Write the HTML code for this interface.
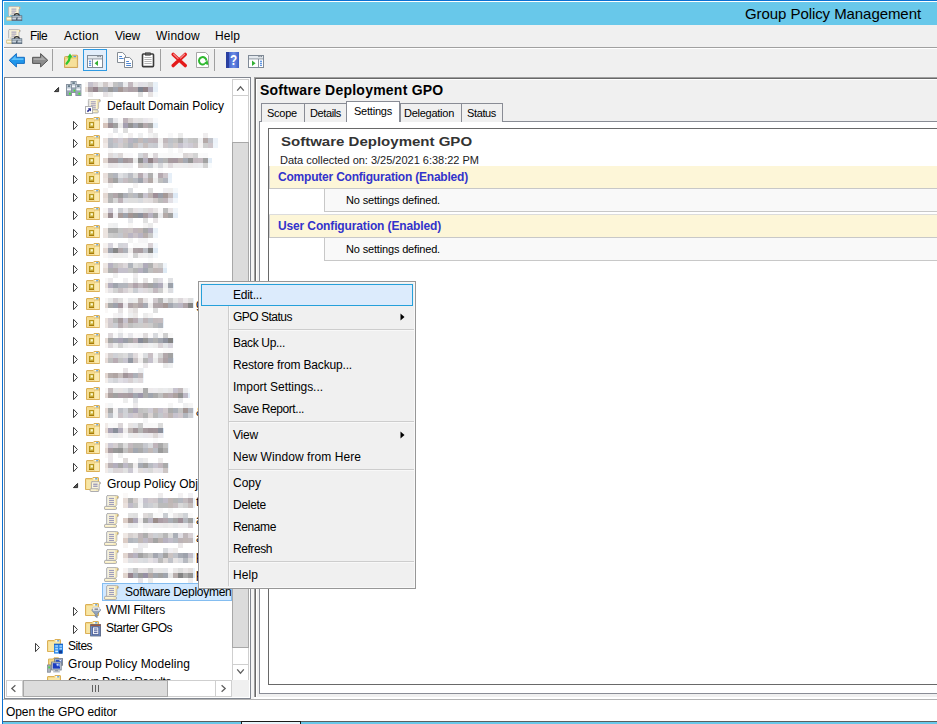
<!DOCTYPE html><html><head><meta charset="utf-8"><title>Group Policy Management</title><style>html,body{margin:0;padding:0}body{width:937px;height:724px;position:relative;overflow:hidden;background:#fff;font-family:'Liberation Sans',sans-serif}
body>div,body>svg,body>span{position:absolute;display:block}.t{white-space:pre}</style></head><body><div style="left:0px;top:0px;width:937px;height:724px;background:#ffffff;"></div>
<div style="left:2px;top:0px;width:935px;height:1px;background:#0a70d2;"></div>
<div style="left:2px;top:0px;width:1px;height:724px;background:#0a70d2;"></div>
<div style="left:4px;top:2px;width:933px;height:23px;background:#68c8ea;"></div>
<div style="left:4px;top:25px;width:933px;height:674px;background:#f0f0f0;"></div>
<span class="t" style="left:745px;top:6px;font-size:15px;line-height:15px;color:#000;letter-spacing:-0.069px;">Group Policy Management</span>
<svg style="left:6px;top:5px" width="17" height="16" viewBox="0 0 17 16"><path d="M3 1.6 H12.4 Q14.4 1.7 14.4 3 Q14.3 4 13 4.1 V10 H2.6 V2.6 Q2.6 1.6 3.6 1.6 Z" fill="#fbf4d6" stroke="#b1b1b5" stroke-width="0.9"/><path d="M3 2.4 V11 H4.2 V2 Z" fill="#e8e8e4"/><path d="M13 2 Q14 2.2 14 3 Q13.9 3.7 13 3.8 Z" fill="#d2b465"/><path d="M5.4 4.1 H10.4 M5.4 6.1 H10.4 M5.4 8.1 H9" stroke="#7f7db4" stroke-width="0.8"/><path d="M0.9 12 H7 V15.4 H0.9 Q0.2 15.2 0.2 13.8 Q0.2 12.1 0.9 12 Z" fill="#f6e9b8" stroke="#c4b88c" stroke-width="0.8"/><path d="M1.2 13 H6 V13.8 H1.2 Z" fill="#fffdf0"/><path d="M8.2 11 Q8.4 8.6 10.8 8.6 Q13.2 8.6 13.4 11" fill="none" stroke="#2a2a2a" stroke-width="1.1"/><rect x="6" y="10.8" width="9.8" height="4.8" fill="#8797a6" stroke="#5a6a7a" stroke-width="0.8"/><rect x="6.4" y="11.2" width="9" height="1.2" fill="#b7c3cd"/><rect x="6.4" y="13" width="9" height="1.1" fill="#c9d3db"/><rect x="10" y="12" width="1.4" height="2.6" fill="#1e2e3e"/><rect x="10.3" y="12.3" width="0.8" height="1.2" fill="#e8eef2"/></svg>
<svg style="left:6px;top:28px" width="17" height="16" viewBox="0 0 17 16"><path d="M3 1.6 H12.4 Q14.4 1.7 14.4 3 Q14.3 4 13 4.1 V10 H2.6 V2.6 Q2.6 1.6 3.6 1.6 Z" fill="#fbf4d6" stroke="#b1b1b5" stroke-width="0.9"/><path d="M3 2.4 V11 H4.2 V2 Z" fill="#e8e8e4"/><path d="M13 2 Q14 2.2 14 3 Q13.9 3.7 13 3.8 Z" fill="#d2b465"/><path d="M5.4 4.1 H10.4 M5.4 6.1 H10.4 M5.4 8.1 H9" stroke="#7f7db4" stroke-width="0.8"/><path d="M0.9 12 H7 V15.4 H0.9 Q0.2 15.2 0.2 13.8 Q0.2 12.1 0.9 12 Z" fill="#f6e9b8" stroke="#c4b88c" stroke-width="0.8"/><path d="M1.2 13 H6 V13.8 H1.2 Z" fill="#fffdf0"/><path d="M8.2 11 Q8.4 8.6 10.8 8.6 Q13.2 8.6 13.4 11" fill="none" stroke="#2a2a2a" stroke-width="1.1"/><rect x="6" y="10.8" width="9.8" height="4.8" fill="#8797a6" stroke="#5a6a7a" stroke-width="0.8"/><rect x="6.4" y="11.2" width="9" height="1.2" fill="#b7c3cd"/><rect x="6.4" y="13" width="9" height="1.1" fill="#c9d3db"/><rect x="10" y="12" width="1.4" height="2.6" fill="#1e2e3e"/><rect x="10.3" y="12.3" width="0.8" height="1.2" fill="#e8eef2"/></svg>
<span class="t" style="left:30px;top:30px;font-size:12px;line-height:12px;color:#000;letter-spacing:-0.586px;">File</span>
<span class="t" style="left:64px;top:30px;font-size:12px;line-height:12px;color:#000;letter-spacing:0.273px;">Action</span>
<span class="t" style="left:115px;top:30px;font-size:12px;line-height:12px;color:#000;letter-spacing:-0.199px;">View</span>
<span class="t" style="left:156px;top:30px;font-size:12px;line-height:12px;color:#000;letter-spacing:0.219px;">Window</span>
<span class="t" style="left:215px;top:30px;font-size:12px;line-height:12px;color:#000;letter-spacing:0.078px;">Help</span>
<div style="left:4px;top:47px;width:933px;height:1px;background:#a0a0a0;"></div>
<div style="left:4px;top:48px;width:933px;height:1px;background:#ffffff;"></div>
<svg style="left:8px;top:51px" width="18" height="18" viewBox="0 0 18 18"><path d="M1.2 9.3 L8.4 2.6 V6.3 H16.4 V12.4 H8.4 V16 Z" fill="#2196ea" stroke="#176fc4" stroke-width="1" stroke-linejoin="round"/><path d="M3.2 9 L7.6 4.8 V7.2 H15.4 V9 Z" fill="#5cc0fa"/></svg>
<svg style="left:31px;top:51px" width="18" height="18" viewBox="0 0 18 18"><path d="M16.8 9.3 L9.6 2.6 V6.3 H1.6 V12.4 H9.6 V16 Z" fill="#8c8c8c" stroke="#555" stroke-width="1" stroke-linejoin="round"/><path d="M14.8 9 L10.4 4.8 V7.2 H2.6 V9 Z" fill="#aaaaaa"/></svg>
<div style="left:52px;top:49px;width:1px;height:22px;background:#a0a0a0"></div>
<svg style="left:63px;top:52px" width="17" height="17" viewBox="0 0 17 17"><path d="M1.5 5.5 Q1.5 4.5 2.5 4.5 H8 L9.4 3.2 H14 Q14.6 3.2 14.6 4 V15.5 H1.5 Z" fill="#f0d27c" stroke="#d0a65a" stroke-width="1"/><path d="M2.5 7 H13.6 V14.6 H2.5 Z" fill="#f6e09a"/><rect x="10.6" y="4" width="2.4" height="1.2" fill="#4d9cf0"/><path d="M3.6 11.6 Q6.4 9.4 6.8 5.4" fill="none" stroke="#2ec82e" stroke-width="2.3" stroke-linecap="round"/><path d="M4.2 5.6 L7 1.6 L9.6 5.4 Z" fill="#2ec82e"/></svg>
<div style="left:83px;top:49px;width:24px;height:22px;background:#e2eefb;border:1px solid #2f9ae2;box-sizing:border-box"></div>
<svg style="left:87px;top:55px" width="16" height="13" viewBox="0 0 16 13"><rect x="0.5" y="0.5" width="15" height="12" fill="#fff" stroke="#808a96" stroke-width="1"/><rect x="1" y="1" width="14" height="2.4" fill="#e4e9ee"/><path d="M10.4 1.6 H11.6 M12.6 1.6 H13.8" stroke="#59636d" stroke-width="1"/><path d="M1 3.9 H15" stroke="#8a94a0"/><path d="M5.5 4 V12" stroke="#8a94a0"/><path d="M2 6.3 H4.2 M2 8.3 H4.2 M2 10.3 H4.2" stroke="#2f74d8" stroke-width="1.1"/><path d="M11 5.6 V11 L7.6 8.3 Z" fill="#34b034"/></svg>
<svg style="left:117px;top:52px" width="17" height="16" viewBox="0 0 17 16"><path d="M0.5 0.5 H5.6 L8.5 3.4 V10.5 H0.5 Z" fill="#fff" stroke="#848c94" stroke-width="1"/><path d="M2.2 4.5 H5 M2.2 6.5 H6.6" stroke="#4f86d0" stroke-width="1"/><path d="M7.5 5.5 H12.6 L15.5 8.4 V15.5 H7.5 Z" fill="#fff" stroke="#848c94" stroke-width="1"/><path d="M9.2 9.5 H12 M9.2 11.5 H14 M9.2 13.5 H14" stroke="#4f86d0" stroke-width="1"/></svg>
<svg style="left:141px;top:52px" width="14" height="16" viewBox="0 0 14 16"><rect x="1.5" y="2" width="11" height="12.6" rx="0.8" fill="#fff" stroke="#3a3a3a" stroke-width="1.6"/><rect x="4.4" y="0.8" width="5.2" height="2.4" fill="#5c5c5c" stroke="#333" stroke-width="0.6"/><path d="M3.4 5.5 H10.6 M3.4 7.5 H10.6 M3.4 9.5 H10.6 M3.4 11.5 H10.6" stroke="#b4b4b4" stroke-width="1"/></svg>
<div style="left:160px;top:49px;width:1px;height:22px;background:#a0a0a0"></div>
<svg style="left:171px;top:52px" width="16" height="16" viewBox="0 0 16 16"><path d="M2.2 2.4 L14.2 13.6 M14.2 2.4 L2.2 13.6" stroke="#e41a1a" stroke-width="3.4" stroke-linecap="round"/><path d="M2.6 2.2 L7 6.4 M13.6 2.2 L9.6 6" stroke="#f28c8c" stroke-width="1.2" stroke-linecap="round"/></svg>
<svg style="left:196px;top:52px" width="14" height="17" viewBox="0 0 14 17"><path d="M0.5 0.5 H9.6 L12.5 3.4 V15.5 H0.5 Z" fill="#fff" stroke="#a6a6a6" stroke-width="1"/><path d="M10.4 8.6 A3.7 3.7 0 1 0 8.6 12" fill="none" stroke="#2eb82e" stroke-width="2"/><path d="M7.4 11.6 L12.4 13 L11.6 8.2 Z" fill="#2eb82e"/></svg>
<div style="left:214px;top:49px;width:1px;height:22px;background:#a0a0a0"></div>
<div style="left:226px;top:52px;width:13px;height:16px;background:linear-gradient(90deg,#2a40a0 0,#2a40a0 2.5px,#4666cf 3px,#6c8ce6 60%,#3c5cc4 100%);"></div>
<span class="t" style="left:229.6px;top:52px;font-size:15px;line-height:16px;font-weight:700;color:#fff;transform:scaleX(0.78);transform-origin:0 0">?</span>
<svg style="left:248px;top:55px" width="16" height="13" viewBox="0 0 16 13"><rect x="0.5" y="0.5" width="15" height="12" fill="#fff" stroke="#808a96" stroke-width="1"/><rect x="1" y="1" width="14" height="2.4" fill="#e4e9ee"/><path d="M10.4 1.6 H11.6 M12.6 1.6 H13.8" stroke="#59636d" stroke-width="1"/><path d="M1 3.9 H15" stroke="#8a94a0"/><path d="M10.5 4 V12" stroke="#8a94a0"/><path d="M12 6.3 H14 M12 8.3 H14 M12 10.3 H14" stroke="#2f74d8" stroke-width="1.1"/><path d="M4 5.6 V11 L7.6 8.3 Z" fill="#34b034"/></svg>
<div style="left:4px;top:77px;width:247px;height:622px;background:#ffffff;border:1px solid #828790;box-sizing:border-box;"></div>
<svg style="left:53px;top:86px" width="7" height="7" viewBox="0 0 7 7"><path d="M5.6 1.4 L5.6 5.6 L1.4 5.6 Z" fill="#595959" stroke="#303030" stroke-width="1"/></svg>
<svg style="left:66px;top:81px" width="16" height="16" viewBox="0 0 16 16"><rect x="5.1" y="0.5" width="5" height="11" fill="#a9b5c1" stroke="#8893a0" stroke-width="1"/><rect x="5.6" y="1" width="4" height="2.4" fill="#dbe6ee"/><rect x="6.3" y="1.5" width="2.6" height="1.1" fill="#1b3545"/><rect x="5.6" y="4.4" width="4" height="1.8" fill="#f4f7fa"/><rect x="5.6" y="7" width="4" height="4" fill="#95a3b3"/><rect x="7.6" y="8.7" width="1.9" height="1.9" fill="#46e82c"/><rect x="0.5" y="3.5" width="5" height="11" fill="#a9b5c1" stroke="#8893a0" stroke-width="1"/><rect x="1" y="4" width="4" height="2.4" fill="#dbe6ee"/><rect x="1.7" y="4.5" width="2.6" height="1.1" fill="#1b3545"/><rect x="1" y="7.4" width="4" height="1.8" fill="#f4f7fa"/><rect x="1" y="10" width="4" height="4" fill="#95a3b3"/><rect x="3" y="11.7" width="1.9" height="1.9" fill="#46e82c"/><rect x="9.9" y="3.5" width="5" height="11" fill="#a9b5c1" stroke="#8893a0" stroke-width="1"/><rect x="10.4" y="4" width="4" height="2.4" fill="#dbe6ee"/><rect x="11.1" y="4.5" width="2.6" height="1.1" fill="#1b3545"/><rect x="10.4" y="7.4" width="4" height="1.8" fill="#f4f7fa"/><rect x="10.4" y="10" width="4" height="4" fill="#95a3b3"/><rect x="12.4" y="11.7" width="1.9" height="1.9" fill="#46e82c"/></svg>
<svg style="left:85px;top:99px" width="16" height="16" viewBox="0 0 16 16"><g transform="translate(0.8,-0.6)"><path d="M3.2 0.6 H12.6 Q14.6 0.6 14.6 2.4 Q14.6 3.8 12.8 3.8 V9.5 L11.6 11.4 H2.6 V2 Q2.6 0.6 3.8 0.6 Z" fill="#fbf4d6" stroke="#a9a9ad" stroke-width="0.9"/><path d="M3.1 1.6 V11 H4.2 V1.2 Z" fill="#e6e6e2"/><path d="M11.4 1.1 H12.4 V10.2 L11.4 11 Z" fill="#eddca6"/><path d="M12.8 1 Q14.2 1.2 14.2 2.4 Q14.1 3.4 12.8 3.5 Z" fill="#d2b465"/><path d="M5 3.4 H10 M5 5.4 H10 M5 7.4 H10 M5 9.4 H10" stroke="#8a88b6" stroke-width="0.9"/><path d="M1 11.4 H11.4 L12.4 12.2 V14 Q12.3 14.5 11.6 14.5 H1 Q0.3 14.4 0.3 13 Q0.3 11.5 1 11.4 Z" fill="#f6e9b8" stroke="#a9a9ad" stroke-width="0.9"/><path d="M1.4 12.4 H9.4 V13.2 H1.4 Z" fill="#fffdf0"/></g><rect x="0.5" y="7.5" width="7" height="7" fill="#fff" stroke="#b0b0b0" stroke-width="1"/><path d="M2.4 12.6 L4.8 10.2" stroke="#262c8e" stroke-width="1.5" fill="none"/><path d="M2.8 9.2 H6 V12.4 Z" fill="#262c8e"/></svg>
<span class="t" style="left:107px;top:100px;font-size:12px;line-height:12px;color:#000;letter-spacing:-0.051px;">Default Domain Policy</span>
<svg style="left:72px;top:120px" width="7" height="11" viewBox="0 0 7 11"><path d="M1.5 1.3 L5.4 5.5 L1.5 9.7 Z" fill="#fff" stroke="#404040" stroke-width="1"/></svg>
<svg style="left:85px;top:117px" width="16" height="16" viewBox="0 0 16 16"><g transform="translate(1,0)"><path d="M0.5 2 Q0.5 1.5 1 1.5 H7 L8 0.5 H13 Q13.5 0.5 13.5 1 V12.5 H0.5 Z" fill="#f3d786" stroke="#dbb057" stroke-width="1"/><path d="M1.5 3 H12.5 V12 H1.5 Z" fill="#f8e6a6"/><path d="M8.6 1.4 H12.5 V2.6 H8 Z" fill="#fdf6d4"/><rect x="10" y="1.2" width="2.2" height="1.2" fill="#4d9cf0"/><rect x="8.6" y="1.2" width="1.6" height="1.2" fill="#ffffff"/><rect x="1.5" y="3" width="7.5" height="9" fill="#f5dc92"/><rect x="9" y="3.4" width="4.4" height="8.6" fill="#faeab0"/><path d="M8 3 H13.4" stroke="#dcb45c" stroke-width="0.8"/><rect x="3" y="5" width="5" height="6" fill="#b8961e"/><rect x="4" y="6" width="3" height="3.4" fill="#d9c868"/><rect x="5" y="6.4" width="1.8" height="1.8" fill="#fbf8d8"/><rect x="3" y="10" width="5" height="1" fill="#a67a08"/></g></svg>
<svg style="left:72px;top:138px" width="7" height="11" viewBox="0 0 7 11"><path d="M1.5 1.3 L5.4 5.5 L1.5 9.7 Z" fill="#fff" stroke="#404040" stroke-width="1"/></svg>
<svg style="left:85px;top:135px" width="16" height="16" viewBox="0 0 16 16"><g transform="translate(1,0)"><path d="M0.5 2 Q0.5 1.5 1 1.5 H7 L8 0.5 H13 Q13.5 0.5 13.5 1 V12.5 H0.5 Z" fill="#f3d786" stroke="#dbb057" stroke-width="1"/><path d="M1.5 3 H12.5 V12 H1.5 Z" fill="#f8e6a6"/><path d="M8.6 1.4 H12.5 V2.6 H8 Z" fill="#fdf6d4"/><rect x="10" y="1.2" width="2.2" height="1.2" fill="#4d9cf0"/><rect x="8.6" y="1.2" width="1.6" height="1.2" fill="#ffffff"/><rect x="1.5" y="3" width="7.5" height="9" fill="#f5dc92"/><rect x="9" y="3.4" width="4.4" height="8.6" fill="#faeab0"/><path d="M8 3 H13.4" stroke="#dcb45c" stroke-width="0.8"/><rect x="3" y="5" width="5" height="6" fill="#b8961e"/><rect x="4" y="6" width="3" height="3.4" fill="#d9c868"/><rect x="5" y="6.4" width="1.8" height="1.8" fill="#fbf8d8"/><rect x="3" y="10" width="5" height="1" fill="#a67a08"/></g></svg>
<svg style="left:72px;top:156px" width="7" height="11" viewBox="0 0 7 11"><path d="M1.5 1.3 L5.4 5.5 L1.5 9.7 Z" fill="#fff" stroke="#404040" stroke-width="1"/></svg>
<svg style="left:85px;top:153px" width="16" height="16" viewBox="0 0 16 16"><g transform="translate(1,0)"><path d="M0.5 2 Q0.5 1.5 1 1.5 H7 L8 0.5 H13 Q13.5 0.5 13.5 1 V12.5 H0.5 Z" fill="#f3d786" stroke="#dbb057" stroke-width="1"/><path d="M1.5 3 H12.5 V12 H1.5 Z" fill="#f8e6a6"/><path d="M8.6 1.4 H12.5 V2.6 H8 Z" fill="#fdf6d4"/><rect x="10" y="1.2" width="2.2" height="1.2" fill="#4d9cf0"/><rect x="8.6" y="1.2" width="1.6" height="1.2" fill="#ffffff"/><rect x="1.5" y="3" width="7.5" height="9" fill="#f5dc92"/><rect x="9" y="3.4" width="4.4" height="8.6" fill="#faeab0"/><path d="M8 3 H13.4" stroke="#dcb45c" stroke-width="0.8"/><rect x="3" y="5" width="5" height="6" fill="#b8961e"/><rect x="4" y="6" width="3" height="3.4" fill="#d9c868"/><rect x="5" y="6.4" width="1.8" height="1.8" fill="#fbf8d8"/><rect x="3" y="10" width="5" height="1" fill="#a67a08"/></g></svg>
<svg style="left:72px;top:174px" width="7" height="11" viewBox="0 0 7 11"><path d="M1.5 1.3 L5.4 5.5 L1.5 9.7 Z" fill="#fff" stroke="#404040" stroke-width="1"/></svg>
<svg style="left:85px;top:171px" width="16" height="16" viewBox="0 0 16 16"><g transform="translate(1,0)"><path d="M0.5 2 Q0.5 1.5 1 1.5 H7 L8 0.5 H13 Q13.5 0.5 13.5 1 V12.5 H0.5 Z" fill="#f3d786" stroke="#dbb057" stroke-width="1"/><path d="M1.5 3 H12.5 V12 H1.5 Z" fill="#f8e6a6"/><path d="M8.6 1.4 H12.5 V2.6 H8 Z" fill="#fdf6d4"/><rect x="10" y="1.2" width="2.2" height="1.2" fill="#4d9cf0"/><rect x="8.6" y="1.2" width="1.6" height="1.2" fill="#ffffff"/><rect x="1.5" y="3" width="7.5" height="9" fill="#f5dc92"/><rect x="9" y="3.4" width="4.4" height="8.6" fill="#faeab0"/><path d="M8 3 H13.4" stroke="#dcb45c" stroke-width="0.8"/><rect x="3" y="5" width="5" height="6" fill="#b8961e"/><rect x="4" y="6" width="3" height="3.4" fill="#d9c868"/><rect x="5" y="6.4" width="1.8" height="1.8" fill="#fbf8d8"/><rect x="3" y="10" width="5" height="1" fill="#a67a08"/></g></svg>
<svg style="left:72px;top:192px" width="7" height="11" viewBox="0 0 7 11"><path d="M1.5 1.3 L5.4 5.5 L1.5 9.7 Z" fill="#fff" stroke="#404040" stroke-width="1"/></svg>
<svg style="left:85px;top:189px" width="16" height="16" viewBox="0 0 16 16"><g transform="translate(1,0)"><path d="M0.5 2 Q0.5 1.5 1 1.5 H7 L8 0.5 H13 Q13.5 0.5 13.5 1 V12.5 H0.5 Z" fill="#f3d786" stroke="#dbb057" stroke-width="1"/><path d="M1.5 3 H12.5 V12 H1.5 Z" fill="#f8e6a6"/><path d="M8.6 1.4 H12.5 V2.6 H8 Z" fill="#fdf6d4"/><rect x="10" y="1.2" width="2.2" height="1.2" fill="#4d9cf0"/><rect x="8.6" y="1.2" width="1.6" height="1.2" fill="#ffffff"/><rect x="1.5" y="3" width="7.5" height="9" fill="#f5dc92"/><rect x="9" y="3.4" width="4.4" height="8.6" fill="#faeab0"/><path d="M8 3 H13.4" stroke="#dcb45c" stroke-width="0.8"/><rect x="3" y="5" width="5" height="6" fill="#b8961e"/><rect x="4" y="6" width="3" height="3.4" fill="#d9c868"/><rect x="5" y="6.4" width="1.8" height="1.8" fill="#fbf8d8"/><rect x="3" y="10" width="5" height="1" fill="#a67a08"/></g></svg>
<svg style="left:72px;top:210px" width="7" height="11" viewBox="0 0 7 11"><path d="M1.5 1.3 L5.4 5.5 L1.5 9.7 Z" fill="#fff" stroke="#404040" stroke-width="1"/></svg>
<svg style="left:85px;top:207px" width="16" height="16" viewBox="0 0 16 16"><g transform="translate(1,0)"><path d="M0.5 2 Q0.5 1.5 1 1.5 H7 L8 0.5 H13 Q13.5 0.5 13.5 1 V12.5 H0.5 Z" fill="#f3d786" stroke="#dbb057" stroke-width="1"/><path d="M1.5 3 H12.5 V12 H1.5 Z" fill="#f8e6a6"/><path d="M8.6 1.4 H12.5 V2.6 H8 Z" fill="#fdf6d4"/><rect x="10" y="1.2" width="2.2" height="1.2" fill="#4d9cf0"/><rect x="8.6" y="1.2" width="1.6" height="1.2" fill="#ffffff"/><rect x="1.5" y="3" width="7.5" height="9" fill="#f5dc92"/><rect x="9" y="3.4" width="4.4" height="8.6" fill="#faeab0"/><path d="M8 3 H13.4" stroke="#dcb45c" stroke-width="0.8"/><rect x="3" y="5" width="5" height="6" fill="#b8961e"/><rect x="4" y="6" width="3" height="3.4" fill="#d9c868"/><rect x="5" y="6.4" width="1.8" height="1.8" fill="#fbf8d8"/><rect x="3" y="10" width="5" height="1" fill="#a67a08"/></g></svg>
<svg style="left:72px;top:228px" width="7" height="11" viewBox="0 0 7 11"><path d="M1.5 1.3 L5.4 5.5 L1.5 9.7 Z" fill="#fff" stroke="#404040" stroke-width="1"/></svg>
<svg style="left:85px;top:225px" width="16" height="16" viewBox="0 0 16 16"><g transform="translate(1,0)"><path d="M0.5 2 Q0.5 1.5 1 1.5 H7 L8 0.5 H13 Q13.5 0.5 13.5 1 V12.5 H0.5 Z" fill="#f3d786" stroke="#dbb057" stroke-width="1"/><path d="M1.5 3 H12.5 V12 H1.5 Z" fill="#f8e6a6"/><path d="M8.6 1.4 H12.5 V2.6 H8 Z" fill="#fdf6d4"/><rect x="10" y="1.2" width="2.2" height="1.2" fill="#4d9cf0"/><rect x="8.6" y="1.2" width="1.6" height="1.2" fill="#ffffff"/><rect x="1.5" y="3" width="7.5" height="9" fill="#f5dc92"/><rect x="9" y="3.4" width="4.4" height="8.6" fill="#faeab0"/><path d="M8 3 H13.4" stroke="#dcb45c" stroke-width="0.8"/><rect x="3" y="5" width="5" height="6" fill="#b8961e"/><rect x="4" y="6" width="3" height="3.4" fill="#d9c868"/><rect x="5" y="6.4" width="1.8" height="1.8" fill="#fbf8d8"/><rect x="3" y="10" width="5" height="1" fill="#a67a08"/></g></svg>
<svg style="left:72px;top:246px" width="7" height="11" viewBox="0 0 7 11"><path d="M1.5 1.3 L5.4 5.5 L1.5 9.7 Z" fill="#fff" stroke="#404040" stroke-width="1"/></svg>
<svg style="left:85px;top:243px" width="16" height="16" viewBox="0 0 16 16"><g transform="translate(1,0)"><path d="M0.5 2 Q0.5 1.5 1 1.5 H7 L8 0.5 H13 Q13.5 0.5 13.5 1 V12.5 H0.5 Z" fill="#f3d786" stroke="#dbb057" stroke-width="1"/><path d="M1.5 3 H12.5 V12 H1.5 Z" fill="#f8e6a6"/><path d="M8.6 1.4 H12.5 V2.6 H8 Z" fill="#fdf6d4"/><rect x="10" y="1.2" width="2.2" height="1.2" fill="#4d9cf0"/><rect x="8.6" y="1.2" width="1.6" height="1.2" fill="#ffffff"/><rect x="1.5" y="3" width="7.5" height="9" fill="#f5dc92"/><rect x="9" y="3.4" width="4.4" height="8.6" fill="#faeab0"/><path d="M8 3 H13.4" stroke="#dcb45c" stroke-width="0.8"/><rect x="3" y="5" width="5" height="6" fill="#b8961e"/><rect x="4" y="6" width="3" height="3.4" fill="#d9c868"/><rect x="5" y="6.4" width="1.8" height="1.8" fill="#fbf8d8"/><rect x="3" y="10" width="5" height="1" fill="#a67a08"/></g></svg>
<svg style="left:72px;top:264px" width="7" height="11" viewBox="0 0 7 11"><path d="M1.5 1.3 L5.4 5.5 L1.5 9.7 Z" fill="#fff" stroke="#404040" stroke-width="1"/></svg>
<svg style="left:85px;top:261px" width="16" height="16" viewBox="0 0 16 16"><g transform="translate(1,0)"><path d="M0.5 2 Q0.5 1.5 1 1.5 H7 L8 0.5 H13 Q13.5 0.5 13.5 1 V12.5 H0.5 Z" fill="#f3d786" stroke="#dbb057" stroke-width="1"/><path d="M1.5 3 H12.5 V12 H1.5 Z" fill="#f8e6a6"/><path d="M8.6 1.4 H12.5 V2.6 H8 Z" fill="#fdf6d4"/><rect x="10" y="1.2" width="2.2" height="1.2" fill="#4d9cf0"/><rect x="8.6" y="1.2" width="1.6" height="1.2" fill="#ffffff"/><rect x="1.5" y="3" width="7.5" height="9" fill="#f5dc92"/><rect x="9" y="3.4" width="4.4" height="8.6" fill="#faeab0"/><path d="M8 3 H13.4" stroke="#dcb45c" stroke-width="0.8"/><rect x="3" y="5" width="5" height="6" fill="#b8961e"/><rect x="4" y="6" width="3" height="3.4" fill="#d9c868"/><rect x="5" y="6.4" width="1.8" height="1.8" fill="#fbf8d8"/><rect x="3" y="10" width="5" height="1" fill="#a67a08"/></g></svg>
<svg style="left:72px;top:282px" width="7" height="11" viewBox="0 0 7 11"><path d="M1.5 1.3 L5.4 5.5 L1.5 9.7 Z" fill="#fff" stroke="#404040" stroke-width="1"/></svg>
<svg style="left:85px;top:279px" width="16" height="16" viewBox="0 0 16 16"><g transform="translate(1,0)"><path d="M0.5 2 Q0.5 1.5 1 1.5 H7 L8 0.5 H13 Q13.5 0.5 13.5 1 V12.5 H0.5 Z" fill="#f3d786" stroke="#dbb057" stroke-width="1"/><path d="M1.5 3 H12.5 V12 H1.5 Z" fill="#f8e6a6"/><path d="M8.6 1.4 H12.5 V2.6 H8 Z" fill="#fdf6d4"/><rect x="10" y="1.2" width="2.2" height="1.2" fill="#4d9cf0"/><rect x="8.6" y="1.2" width="1.6" height="1.2" fill="#ffffff"/><rect x="1.5" y="3" width="7.5" height="9" fill="#f5dc92"/><rect x="9" y="3.4" width="4.4" height="8.6" fill="#faeab0"/><path d="M8 3 H13.4" stroke="#dcb45c" stroke-width="0.8"/><rect x="3" y="5" width="5" height="6" fill="#b8961e"/><rect x="4" y="6" width="3" height="3.4" fill="#d9c868"/><rect x="5" y="6.4" width="1.8" height="1.8" fill="#fbf8d8"/><rect x="3" y="10" width="5" height="1" fill="#a67a08"/></g></svg>
<svg style="left:72px;top:300px" width="7" height="11" viewBox="0 0 7 11"><path d="M1.5 1.3 L5.4 5.5 L1.5 9.7 Z" fill="#fff" stroke="#404040" stroke-width="1"/></svg>
<svg style="left:85px;top:297px" width="16" height="16" viewBox="0 0 16 16"><g transform="translate(1,0)"><path d="M0.5 2 Q0.5 1.5 1 1.5 H7 L8 0.5 H13 Q13.5 0.5 13.5 1 V12.5 H0.5 Z" fill="#f3d786" stroke="#dbb057" stroke-width="1"/><path d="M1.5 3 H12.5 V12 H1.5 Z" fill="#f8e6a6"/><path d="M8.6 1.4 H12.5 V2.6 H8 Z" fill="#fdf6d4"/><rect x="10" y="1.2" width="2.2" height="1.2" fill="#4d9cf0"/><rect x="8.6" y="1.2" width="1.6" height="1.2" fill="#ffffff"/><rect x="1.5" y="3" width="7.5" height="9" fill="#f5dc92"/><rect x="9" y="3.4" width="4.4" height="8.6" fill="#faeab0"/><path d="M8 3 H13.4" stroke="#dcb45c" stroke-width="0.8"/><rect x="3" y="5" width="5" height="6" fill="#b8961e"/><rect x="4" y="6" width="3" height="3.4" fill="#d9c868"/><rect x="5" y="6.4" width="1.8" height="1.8" fill="#fbf8d8"/><rect x="3" y="10" width="5" height="1" fill="#a67a08"/></g></svg>
<span class="t" style="left:196px;top:298px;font-size:12px;line-height:12px;color:#000;">g</span>
<svg style="left:72px;top:318px" width="7" height="11" viewBox="0 0 7 11"><path d="M1.5 1.3 L5.4 5.5 L1.5 9.7 Z" fill="#fff" stroke="#404040" stroke-width="1"/></svg>
<svg style="left:85px;top:315px" width="16" height="16" viewBox="0 0 16 16"><g transform="translate(1,0)"><path d="M0.5 2 Q0.5 1.5 1 1.5 H7 L8 0.5 H13 Q13.5 0.5 13.5 1 V12.5 H0.5 Z" fill="#f3d786" stroke="#dbb057" stroke-width="1"/><path d="M1.5 3 H12.5 V12 H1.5 Z" fill="#f8e6a6"/><path d="M8.6 1.4 H12.5 V2.6 H8 Z" fill="#fdf6d4"/><rect x="10" y="1.2" width="2.2" height="1.2" fill="#4d9cf0"/><rect x="8.6" y="1.2" width="1.6" height="1.2" fill="#ffffff"/><rect x="1.5" y="3" width="7.5" height="9" fill="#f5dc92"/><rect x="9" y="3.4" width="4.4" height="8.6" fill="#faeab0"/><path d="M8 3 H13.4" stroke="#dcb45c" stroke-width="0.8"/><rect x="3" y="5" width="5" height="6" fill="#b8961e"/><rect x="4" y="6" width="3" height="3.4" fill="#d9c868"/><rect x="5" y="6.4" width="1.8" height="1.8" fill="#fbf8d8"/><rect x="3" y="10" width="5" height="1" fill="#a67a08"/></g></svg>
<svg style="left:72px;top:336px" width="7" height="11" viewBox="0 0 7 11"><path d="M1.5 1.3 L5.4 5.5 L1.5 9.7 Z" fill="#fff" stroke="#404040" stroke-width="1"/></svg>
<svg style="left:85px;top:333px" width="16" height="16" viewBox="0 0 16 16"><g transform="translate(1,0)"><path d="M0.5 2 Q0.5 1.5 1 1.5 H7 L8 0.5 H13 Q13.5 0.5 13.5 1 V12.5 H0.5 Z" fill="#f3d786" stroke="#dbb057" stroke-width="1"/><path d="M1.5 3 H12.5 V12 H1.5 Z" fill="#f8e6a6"/><path d="M8.6 1.4 H12.5 V2.6 H8 Z" fill="#fdf6d4"/><rect x="10" y="1.2" width="2.2" height="1.2" fill="#4d9cf0"/><rect x="8.6" y="1.2" width="1.6" height="1.2" fill="#ffffff"/><rect x="1.5" y="3" width="7.5" height="9" fill="#f5dc92"/><rect x="9" y="3.4" width="4.4" height="8.6" fill="#faeab0"/><path d="M8 3 H13.4" stroke="#dcb45c" stroke-width="0.8"/><rect x="3" y="5" width="5" height="6" fill="#b8961e"/><rect x="4" y="6" width="3" height="3.4" fill="#d9c868"/><rect x="5" y="6.4" width="1.8" height="1.8" fill="#fbf8d8"/><rect x="3" y="10" width="5" height="1" fill="#a67a08"/></g></svg>
<svg style="left:72px;top:354px" width="7" height="11" viewBox="0 0 7 11"><path d="M1.5 1.3 L5.4 5.5 L1.5 9.7 Z" fill="#fff" stroke="#404040" stroke-width="1"/></svg>
<svg style="left:85px;top:351px" width="16" height="16" viewBox="0 0 16 16"><g transform="translate(1,0)"><path d="M0.5 2 Q0.5 1.5 1 1.5 H7 L8 0.5 H13 Q13.5 0.5 13.5 1 V12.5 H0.5 Z" fill="#f3d786" stroke="#dbb057" stroke-width="1"/><path d="M1.5 3 H12.5 V12 H1.5 Z" fill="#f8e6a6"/><path d="M8.6 1.4 H12.5 V2.6 H8 Z" fill="#fdf6d4"/><rect x="10" y="1.2" width="2.2" height="1.2" fill="#4d9cf0"/><rect x="8.6" y="1.2" width="1.6" height="1.2" fill="#ffffff"/><rect x="1.5" y="3" width="7.5" height="9" fill="#f5dc92"/><rect x="9" y="3.4" width="4.4" height="8.6" fill="#faeab0"/><path d="M8 3 H13.4" stroke="#dcb45c" stroke-width="0.8"/><rect x="3" y="5" width="5" height="6" fill="#b8961e"/><rect x="4" y="6" width="3" height="3.4" fill="#d9c868"/><rect x="5" y="6.4" width="1.8" height="1.8" fill="#fbf8d8"/><rect x="3" y="10" width="5" height="1" fill="#a67a08"/></g></svg>
<svg style="left:72px;top:372px" width="7" height="11" viewBox="0 0 7 11"><path d="M1.5 1.3 L5.4 5.5 L1.5 9.7 Z" fill="#fff" stroke="#404040" stroke-width="1"/></svg>
<svg style="left:85px;top:369px" width="16" height="16" viewBox="0 0 16 16"><g transform="translate(1,0)"><path d="M0.5 2 Q0.5 1.5 1 1.5 H7 L8 0.5 H13 Q13.5 0.5 13.5 1 V12.5 H0.5 Z" fill="#f3d786" stroke="#dbb057" stroke-width="1"/><path d="M1.5 3 H12.5 V12 H1.5 Z" fill="#f8e6a6"/><path d="M8.6 1.4 H12.5 V2.6 H8 Z" fill="#fdf6d4"/><rect x="10" y="1.2" width="2.2" height="1.2" fill="#4d9cf0"/><rect x="8.6" y="1.2" width="1.6" height="1.2" fill="#ffffff"/><rect x="1.5" y="3" width="7.5" height="9" fill="#f5dc92"/><rect x="9" y="3.4" width="4.4" height="8.6" fill="#faeab0"/><path d="M8 3 H13.4" stroke="#dcb45c" stroke-width="0.8"/><rect x="3" y="5" width="5" height="6" fill="#b8961e"/><rect x="4" y="6" width="3" height="3.4" fill="#d9c868"/><rect x="5" y="6.4" width="1.8" height="1.8" fill="#fbf8d8"/><rect x="3" y="10" width="5" height="1" fill="#a67a08"/></g></svg>
<svg style="left:72px;top:390px" width="7" height="11" viewBox="0 0 7 11"><path d="M1.5 1.3 L5.4 5.5 L1.5 9.7 Z" fill="#fff" stroke="#404040" stroke-width="1"/></svg>
<svg style="left:85px;top:387px" width="16" height="16" viewBox="0 0 16 16"><g transform="translate(1,0)"><path d="M0.5 2 Q0.5 1.5 1 1.5 H7 L8 0.5 H13 Q13.5 0.5 13.5 1 V12.5 H0.5 Z" fill="#f3d786" stroke="#dbb057" stroke-width="1"/><path d="M1.5 3 H12.5 V12 H1.5 Z" fill="#f8e6a6"/><path d="M8.6 1.4 H12.5 V2.6 H8 Z" fill="#fdf6d4"/><rect x="10" y="1.2" width="2.2" height="1.2" fill="#4d9cf0"/><rect x="8.6" y="1.2" width="1.6" height="1.2" fill="#ffffff"/><rect x="1.5" y="3" width="7.5" height="9" fill="#f5dc92"/><rect x="9" y="3.4" width="4.4" height="8.6" fill="#faeab0"/><path d="M8 3 H13.4" stroke="#dcb45c" stroke-width="0.8"/><rect x="3" y="5" width="5" height="6" fill="#b8961e"/><rect x="4" y="6" width="3" height="3.4" fill="#d9c868"/><rect x="5" y="6.4" width="1.8" height="1.8" fill="#fbf8d8"/><rect x="3" y="10" width="5" height="1" fill="#a67a08"/></g></svg>
<svg style="left:72px;top:408px" width="7" height="11" viewBox="0 0 7 11"><path d="M1.5 1.3 L5.4 5.5 L1.5 9.7 Z" fill="#fff" stroke="#404040" stroke-width="1"/></svg>
<svg style="left:85px;top:405px" width="16" height="16" viewBox="0 0 16 16"><g transform="translate(1,0)"><path d="M0.5 2 Q0.5 1.5 1 1.5 H7 L8 0.5 H13 Q13.5 0.5 13.5 1 V12.5 H0.5 Z" fill="#f3d786" stroke="#dbb057" stroke-width="1"/><path d="M1.5 3 H12.5 V12 H1.5 Z" fill="#f8e6a6"/><path d="M8.6 1.4 H12.5 V2.6 H8 Z" fill="#fdf6d4"/><rect x="10" y="1.2" width="2.2" height="1.2" fill="#4d9cf0"/><rect x="8.6" y="1.2" width="1.6" height="1.2" fill="#ffffff"/><rect x="1.5" y="3" width="7.5" height="9" fill="#f5dc92"/><rect x="9" y="3.4" width="4.4" height="8.6" fill="#faeab0"/><path d="M8 3 H13.4" stroke="#dcb45c" stroke-width="0.8"/><rect x="3" y="5" width="5" height="6" fill="#b8961e"/><rect x="4" y="6" width="3" height="3.4" fill="#d9c868"/><rect x="5" y="6.4" width="1.8" height="1.8" fill="#fbf8d8"/><rect x="3" y="10" width="5" height="1" fill="#a67a08"/></g></svg>
<span class="t" style="left:196px;top:406px;font-size:12px;line-height:12px;color:#000;">&amp;</span>
<svg style="left:72px;top:426px" width="7" height="11" viewBox="0 0 7 11"><path d="M1.5 1.3 L5.4 5.5 L1.5 9.7 Z" fill="#fff" stroke="#404040" stroke-width="1"/></svg>
<svg style="left:85px;top:423px" width="16" height="16" viewBox="0 0 16 16"><g transform="translate(1,0)"><path d="M0.5 2 Q0.5 1.5 1 1.5 H7 L8 0.5 H13 Q13.5 0.5 13.5 1 V12.5 H0.5 Z" fill="#f3d786" stroke="#dbb057" stroke-width="1"/><path d="M1.5 3 H12.5 V12 H1.5 Z" fill="#f8e6a6"/><path d="M8.6 1.4 H12.5 V2.6 H8 Z" fill="#fdf6d4"/><rect x="10" y="1.2" width="2.2" height="1.2" fill="#4d9cf0"/><rect x="8.6" y="1.2" width="1.6" height="1.2" fill="#ffffff"/><rect x="1.5" y="3" width="7.5" height="9" fill="#f5dc92"/><rect x="9" y="3.4" width="4.4" height="8.6" fill="#faeab0"/><path d="M8 3 H13.4" stroke="#dcb45c" stroke-width="0.8"/><rect x="3" y="5" width="5" height="6" fill="#b8961e"/><rect x="4" y="6" width="3" height="3.4" fill="#d9c868"/><rect x="5" y="6.4" width="1.8" height="1.8" fill="#fbf8d8"/><rect x="3" y="10" width="5" height="1" fill="#a67a08"/></g></svg>
<svg style="left:72px;top:444px" width="7" height="11" viewBox="0 0 7 11"><path d="M1.5 1.3 L5.4 5.5 L1.5 9.7 Z" fill="#fff" stroke="#404040" stroke-width="1"/></svg>
<svg style="left:85px;top:441px" width="16" height="16" viewBox="0 0 16 16"><g transform="translate(1,0)"><path d="M0.5 2 Q0.5 1.5 1 1.5 H7 L8 0.5 H13 Q13.5 0.5 13.5 1 V12.5 H0.5 Z" fill="#f3d786" stroke="#dbb057" stroke-width="1"/><path d="M1.5 3 H12.5 V12 H1.5 Z" fill="#f8e6a6"/><path d="M8.6 1.4 H12.5 V2.6 H8 Z" fill="#fdf6d4"/><rect x="10" y="1.2" width="2.2" height="1.2" fill="#4d9cf0"/><rect x="8.6" y="1.2" width="1.6" height="1.2" fill="#ffffff"/><rect x="1.5" y="3" width="7.5" height="9" fill="#f5dc92"/><rect x="9" y="3.4" width="4.4" height="8.6" fill="#faeab0"/><path d="M8 3 H13.4" stroke="#dcb45c" stroke-width="0.8"/><rect x="3" y="5" width="5" height="6" fill="#b8961e"/><rect x="4" y="6" width="3" height="3.4" fill="#d9c868"/><rect x="5" y="6.4" width="1.8" height="1.8" fill="#fbf8d8"/><rect x="3" y="10" width="5" height="1" fill="#a67a08"/></g></svg>
<svg style="left:72px;top:462px" width="7" height="11" viewBox="0 0 7 11"><path d="M1.5 1.3 L5.4 5.5 L1.5 9.7 Z" fill="#fff" stroke="#404040" stroke-width="1"/></svg>
<svg style="left:85px;top:459px" width="16" height="16" viewBox="0 0 16 16"><g transform="translate(1,0)"><path d="M0.5 2 Q0.5 1.5 1 1.5 H7 L8 0.5 H13 Q13.5 0.5 13.5 1 V12.5 H0.5 Z" fill="#f3d786" stroke="#dbb057" stroke-width="1"/><path d="M1.5 3 H12.5 V12 H1.5 Z" fill="#f8e6a6"/><path d="M8.6 1.4 H12.5 V2.6 H8 Z" fill="#fdf6d4"/><rect x="10" y="1.2" width="2.2" height="1.2" fill="#4d9cf0"/><rect x="8.6" y="1.2" width="1.6" height="1.2" fill="#ffffff"/><rect x="1.5" y="3" width="7.5" height="9" fill="#f5dc92"/><rect x="9" y="3.4" width="4.4" height="8.6" fill="#faeab0"/><path d="M8 3 H13.4" stroke="#dcb45c" stroke-width="0.8"/><rect x="3" y="5" width="5" height="6" fill="#b8961e"/><rect x="4" y="6" width="3" height="3.4" fill="#d9c868"/><rect x="5" y="6.4" width="1.8" height="1.8" fill="#fbf8d8"/><rect x="3" y="10" width="5" height="1" fill="#a67a08"/></g></svg>
<svg style="left:72px;top:482px" width="7" height="7" viewBox="0 0 7 7"><path d="M5.6 1.4 L5.6 5.6 L1.4 5.6 Z" fill="#595959" stroke="#303030" stroke-width="1"/></svg>
<svg style="left:85px;top:477px" width="17" height="16" viewBox="0 0 17 16"><path d="M0.5 2 Q0.5 1.5 1 1.5 H7 L8 0.5 H13 Q13.5 0.5 13.5 1 V12.5 H0.5 Z" fill="#f3d786" stroke="#dbb057" stroke-width="1"/><path d="M1.5 3 H12.5 V12 H1.5 Z" fill="#f8e6a6"/><path d="M8.6 1.4 H12.5 V2.6 H8 Z" fill="#fdf6d4"/><rect x="10" y="1.2" width="2.2" height="1.2" fill="#4d9cf0"/><rect x="8.6" y="1.2" width="1.6" height="1.2" fill="#ffffff"/><g transform="translate(5.2,4.2)"><path d="M1.6 0.5 H8.6 Q10.4 0.6 10.4 2 Q10.3 3 9 3 V8 L8 9.4 H1.2 V1.4 Q1.2 0.5 2 0.5 Z" fill="#fbf5dc" stroke="#a4a4ac" stroke-width="0.9"/><path d="M9.1 0.9 Q10 1.1 10 2 Q9.9 2.7 9.1 2.8 Z" fill="#d2b465"/><path d="M3 3 H7.4 M3 5 H7.4" stroke="#7c7aac" stroke-width="1"/><path d="M0.5 7.6 H7.8 L8.6 8.3 V9.8 Q8.5 10.3 7.9 10.3 H0.5 Q-0.2 10.2 -0.2 9 Q-0.2 7.7 0.5 7.6 Z" fill="#f6e9b8" stroke="#a4a4ac" stroke-width="0.9"/><path d="M0.8 8.5 H6 V9.2 H0.8 Z" fill="#fffdf0"/></g></svg>
<span class="t" style="left:107px;top:478px;font-size:12px;line-height:12px;color:#000;letter-spacing:0.014px;">Group Policy Objects</span>
<svg style="left:104px;top:495px" width="16" height="16" viewBox="0 0 16 16"><path d="M3.2 0.6 H12.6 Q14.6 0.6 14.6 2.4 Q14.6 3.8 12.8 3.8 V9.5 L11.6 11.4 H2.6 V2 Q2.6 0.6 3.8 0.6 Z" fill="#fbf4d6" stroke="#a9a9ad" stroke-width="0.9"/><path d="M3.1 1.6 V11 H4.2 V1.2 Z" fill="#e6e6e2"/><path d="M11.4 1.1 H12.4 V10.2 L11.4 11 Z" fill="#eddca6"/><path d="M12.8 1 Q14.2 1.2 14.2 2.4 Q14.1 3.4 12.8 3.5 Z" fill="#d2b465"/><path d="M5 3.4 H10 M5 5.4 H10 M5 7.4 H10 M5 9.4 H10" stroke="#8a88b6" stroke-width="0.9"/><path d="M1 11.4 H11.4 L12.4 12.2 V14 Q12.3 14.5 11.6 14.5 H1 Q0.3 14.4 0.3 13 Q0.3 11.5 1 11.4 Z" fill="#f6e9b8" stroke="#a9a9ad" stroke-width="0.9"/><path d="M1.4 12.4 H9.4 V13.2 H1.4 Z" fill="#fffdf0"/></svg>
<span class="t" style="left:196px;top:496px;font-size:12px;line-height:12px;color:#000;">t</span>
<svg style="left:104px;top:513px" width="16" height="16" viewBox="0 0 16 16"><path d="M3.2 0.6 H12.6 Q14.6 0.6 14.6 2.4 Q14.6 3.8 12.8 3.8 V9.5 L11.6 11.4 H2.6 V2 Q2.6 0.6 3.8 0.6 Z" fill="#fbf4d6" stroke="#a9a9ad" stroke-width="0.9"/><path d="M3.1 1.6 V11 H4.2 V1.2 Z" fill="#e6e6e2"/><path d="M11.4 1.1 H12.4 V10.2 L11.4 11 Z" fill="#eddca6"/><path d="M12.8 1 Q14.2 1.2 14.2 2.4 Q14.1 3.4 12.8 3.5 Z" fill="#d2b465"/><path d="M5 3.4 H10 M5 5.4 H10 M5 7.4 H10 M5 9.4 H10" stroke="#8a88b6" stroke-width="0.9"/><path d="M1 11.4 H11.4 L12.4 12.2 V14 Q12.3 14.5 11.6 14.5 H1 Q0.3 14.4 0.3 13 Q0.3 11.5 1 11.4 Z" fill="#f6e9b8" stroke="#a9a9ad" stroke-width="0.9"/><path d="M1.4 12.4 H9.4 V13.2 H1.4 Z" fill="#fffdf0"/></svg>
<span class="t" style="left:196px;top:514px;font-size:12px;line-height:12px;color:#000;">a</span>
<svg style="left:104px;top:531px" width="16" height="16" viewBox="0 0 16 16"><path d="M3.2 0.6 H12.6 Q14.6 0.6 14.6 2.4 Q14.6 3.8 12.8 3.8 V9.5 L11.6 11.4 H2.6 V2 Q2.6 0.6 3.8 0.6 Z" fill="#fbf4d6" stroke="#a9a9ad" stroke-width="0.9"/><path d="M3.1 1.6 V11 H4.2 V1.2 Z" fill="#e6e6e2"/><path d="M11.4 1.1 H12.4 V10.2 L11.4 11 Z" fill="#eddca6"/><path d="M12.8 1 Q14.2 1.2 14.2 2.4 Q14.1 3.4 12.8 3.5 Z" fill="#d2b465"/><path d="M5 3.4 H10 M5 5.4 H10 M5 7.4 H10 M5 9.4 H10" stroke="#8a88b6" stroke-width="0.9"/><path d="M1 11.4 H11.4 L12.4 12.2 V14 Q12.3 14.5 11.6 14.5 H1 Q0.3 14.4 0.3 13 Q0.3 11.5 1 11.4 Z" fill="#f6e9b8" stroke="#a9a9ad" stroke-width="0.9"/><path d="M1.4 12.4 H9.4 V13.2 H1.4 Z" fill="#fffdf0"/></svg>
<span class="t" style="left:196px;top:532px;font-size:12px;line-height:12px;color:#000;">a</span>
<svg style="left:104px;top:549px" width="16" height="16" viewBox="0 0 16 16"><path d="M3.2 0.6 H12.6 Q14.6 0.6 14.6 2.4 Q14.6 3.8 12.8 3.8 V9.5 L11.6 11.4 H2.6 V2 Q2.6 0.6 3.8 0.6 Z" fill="#fbf4d6" stroke="#a9a9ad" stroke-width="0.9"/><path d="M3.1 1.6 V11 H4.2 V1.2 Z" fill="#e6e6e2"/><path d="M11.4 1.1 H12.4 V10.2 L11.4 11 Z" fill="#eddca6"/><path d="M12.8 1 Q14.2 1.2 14.2 2.4 Q14.1 3.4 12.8 3.5 Z" fill="#d2b465"/><path d="M5 3.4 H10 M5 5.4 H10 M5 7.4 H10 M5 9.4 H10" stroke="#8a88b6" stroke-width="0.9"/><path d="M1 11.4 H11.4 L12.4 12.2 V14 Q12.3 14.5 11.6 14.5 H1 Q0.3 14.4 0.3 13 Q0.3 11.5 1 11.4 Z" fill="#f6e9b8" stroke="#a9a9ad" stroke-width="0.9"/><path d="M1.4 12.4 H9.4 V13.2 H1.4 Z" fill="#fffdf0"/></svg>
<span class="t" style="left:196px;top:550px;font-size:12px;line-height:12px;color:#000;">p</span>
<svg style="left:104px;top:567px" width="16" height="16" viewBox="0 0 16 16"><path d="M3.2 0.6 H12.6 Q14.6 0.6 14.6 2.4 Q14.6 3.8 12.8 3.8 V9.5 L11.6 11.4 H2.6 V2 Q2.6 0.6 3.8 0.6 Z" fill="#fbf4d6" stroke="#a9a9ad" stroke-width="0.9"/><path d="M3.1 1.6 V11 H4.2 V1.2 Z" fill="#e6e6e2"/><path d="M11.4 1.1 H12.4 V10.2 L11.4 11 Z" fill="#eddca6"/><path d="M12.8 1 Q14.2 1.2 14.2 2.4 Q14.1 3.4 12.8 3.5 Z" fill="#d2b465"/><path d="M5 3.4 H10 M5 5.4 H10 M5 7.4 H10 M5 9.4 H10" stroke="#8a88b6" stroke-width="0.9"/><path d="M1 11.4 H11.4 L12.4 12.2 V14 Q12.3 14.5 11.6 14.5 H1 Q0.3 14.4 0.3 13 Q0.3 11.5 1 11.4 Z" fill="#f6e9b8" stroke="#a9a9ad" stroke-width="0.9"/><path d="M1.4 12.4 H9.4 V13.2 H1.4 Z" fill="#fffdf0"/></svg>
<span class="t" style="left:196px;top:568px;font-size:12px;line-height:12px;color:#000;">p</span>
<div style="left:102px;top:583px;width:130px;height:18px;background:#d1e8ff;border:1px solid #84bdf0;box-sizing:border-box;"></div>
<svg style="left:104px;top:585px" width="16" height="16" viewBox="0 0 16 16"><path d="M3.2 0.6 H12.6 Q14.6 0.6 14.6 2.4 Q14.6 3.8 12.8 3.8 V9.5 L11.6 11.4 H2.6 V2 Q2.6 0.6 3.8 0.6 Z" fill="#fbf4d6" stroke="#a9a9ad" stroke-width="0.9"/><path d="M3.1 1.6 V11 H4.2 V1.2 Z" fill="#e6e6e2"/><path d="M11.4 1.1 H12.4 V10.2 L11.4 11 Z" fill="#eddca6"/><path d="M12.8 1 Q14.2 1.2 14.2 2.4 Q14.1 3.4 12.8 3.5 Z" fill="#d2b465"/><path d="M5 3.4 H10 M5 5.4 H10 M5 7.4 H10 M5 9.4 H10" stroke="#8a88b6" stroke-width="0.9"/><path d="M1 11.4 H11.4 L12.4 12.2 V14 Q12.3 14.5 11.6 14.5 H1 Q0.3 14.4 0.3 13 Q0.3 11.5 1 11.4 Z" fill="#f6e9b8" stroke="#a9a9ad" stroke-width="0.9"/><path d="M1.4 12.4 H9.4 V13.2 H1.4 Z" fill="#fffdf0"/></svg>
<span class="t" style="left:125px;top:586px;font-size:12px;line-height:12px;color:#000;letter-spacing:-0.275px;width:106px;overflow:hidden;">Software Deployment GPO</span>
<svg style="left:72px;top:606px" width="7" height="11" viewBox="0 0 7 11"><path d="M1.5 1.3 L5.4 5.5 L1.5 9.7 Z" fill="#fff" stroke="#404040" stroke-width="1"/></svg>
<svg style="left:85px;top:603px" width="17" height="16" viewBox="0 0 17 16"><path d="M0.5 2 Q0.5 1.5 1 1.5 H7 L8 0.5 H13 Q13.5 0.5 13.5 1 V12.5 H0.5 Z" fill="#f3d786" stroke="#dbb057" stroke-width="1"/><path d="M1.5 3 H12.5 V12 H1.5 Z" fill="#f8e6a6"/><path d="M8.6 1.4 H12.5 V2.6 H8 Z" fill="#fdf6d4"/><rect x="10" y="1.2" width="2.2" height="1.2" fill="#4d9cf0"/><rect x="8.6" y="1.2" width="1.6" height="1.2" fill="#ffffff"/><path d="M7 6.4 H15.4 V7.6 L12.2 11.2 V14.6 L10.2 13.4 V11.2 L7 7.6 Z" fill="#93a3bb" stroke="#6c7c94" stroke-width="0.7"/><rect x="8" y="4.2" width="6.6" height="3.6" fill="#ffffff" stroke="#b8c0cc" stroke-width="0.6"/><rect x="9.4" y="5.6" width="3.8" height="1" fill="#3c4658"/></svg>
<span class="t" style="left:106px;top:604px;font-size:12px;line-height:12px;color:#000;letter-spacing:-0.151px;">WMI Filters</span>
<svg style="left:72px;top:624px" width="7" height="11" viewBox="0 0 7 11"><path d="M1.5 1.3 L5.4 5.5 L1.5 9.7 Z" fill="#fff" stroke="#404040" stroke-width="1"/></svg>
<svg style="left:85px;top:621px" width="17" height="16" viewBox="0 0 17 16"><path d="M0.5 2 Q0.5 1.5 1 1.5 H7 L8 0.5 H13 Q13.5 0.5 13.5 1 V12.5 H0.5 Z" fill="#f3d786" stroke="#dbb057" stroke-width="1"/><path d="M1.5 3 H12.5 V12 H1.5 Z" fill="#f8e6a6"/><path d="M8.6 1.4 H12.5 V2.6 H8 Z" fill="#fdf6d4"/><rect x="10" y="1.2" width="2.2" height="1.2" fill="#4d9cf0"/><rect x="8.6" y="1.2" width="1.6" height="1.2" fill="#ffffff"/><rect x="5.6" y="3.6" width="10" height="11.4" fill="#6e8cc8" stroke="#54607c" stroke-width="0.8"/><rect x="5.6" y="3.6" width="10" height="1.6" fill="#a05a3c"/><rect x="7.6" y="6" width="6.2" height="7.6" fill="#f4f6fb" stroke="#3e4e84" stroke-width="0.7"/><path d="M9 8 H12.4 M9 9.8 H12.4 M9 11.6 H12.4" stroke="#3c4c90" stroke-width="0.9"/></svg>
<span class="t" style="left:106px;top:622px;font-size:12px;line-height:12px;color:#000;letter-spacing:-0.503px;">Starter GPOs</span>
<svg style="left:34px;top:642px" width="7" height="11" viewBox="0 0 7 11"><path d="M1.5 1.3 L5.4 5.5 L1.5 9.7 Z" fill="#fff" stroke="#404040" stroke-width="1"/></svg>
<svg style="left:47px;top:639px" width="17" height="16" viewBox="0 0 17 16"><path d="M0.5 2 Q0.5 1.5 1 1.5 H7 L8 0.5 H13 Q13.5 0.5 13.5 1 V12.5 H0.5 Z" fill="#f3d786" stroke="#dbb057" stroke-width="1"/><path d="M1.5 3 H12.5 V12 H1.5 Z" fill="#f8e6a6"/><path d="M8.6 1.4 H12.5 V2.6 H8 Z" fill="#fdf6d4"/><rect x="10" y="1.2" width="2.2" height="1.2" fill="#4d9cf0"/><rect x="8.6" y="1.2" width="1.6" height="1.2" fill="#ffffff"/><rect x="7" y="4.8" width="9" height="9.8" fill="#2b86e6"/><rect x="7" y="4.8" width="9" height="1" fill="#1b62c4"/><path d="M8.2 7 H11 M12.4 7 H15 M8.2 9.6 H11 M12.4 9.6 H15" stroke="#a9d6ff" stroke-width="1.7"/><path d="M8.2 12.4 H11" stroke="#d9efff" stroke-width="1.6"/><rect x="12" y="11.4" width="3" height="3.2" fill="#123c94"/></svg>
<span class="t" style="left:68px;top:640px;font-size:12px;line-height:12px;color:#000;letter-spacing:-0.537px;">Sites</span>
<svg style="left:47px;top:657px" width="17" height="16" viewBox="0 0 17 16"><path d="M1.5 2 H6 L7 0.8 H11.5 V8 H1.5 Z" fill="#f3d786" stroke="#dbb057" stroke-width="0.9"/><rect x="7.6" y="1.6" width="8" height="6.6" fill="#aeb8c6" stroke="#6e7886" stroke-width="0.8"/><rect x="8.8" y="2.8" width="5.6" height="4.2" fill="#2850c8"/><path d="M12 3 L14 3 L14 5 Z" fill="#e8f0ff"/><rect x="4.6" y="5" width="9.6" height="8" fill="#c2cad6" stroke="#6e7886" stroke-width="0.8"/><rect x="5.8" y="6.2" width="7.2" height="5.4" fill="#1c3cc0"/><path d="M9 6.4 L12.8 6.4 L12.8 10 Z" fill="#7fa6f2"/><path d="M9.4 7.2 L11 7.2 L10.2 9.4 Z" fill="#ffffff"/><rect x="8" y="13" width="3" height="1.4" fill="#8e98a6"/><rect x="6.2" y="14.2" width="6.6" height="1.2" fill="#a8b0bc"/><rect x="0.6" y="8" width="3" height="7.2" fill="#aab2be" stroke="#767e8a" stroke-width="0.7"/><rect x="1.4" y="9.4" width="1.4" height="2" fill="#38d838"/></svg>
<span class="t" style="left:68px;top:658px;font-size:12px;line-height:12px;color:#000;letter-spacing:0.060px;">Group Policy Modeling</span>
<svg style="left:47px;top:675px" width="17" height="16" viewBox="0 0 17 16"><path d="M0.5 2 Q0.5 1.5 1 1.5 H7 L8 0.5 H13 Q13.5 0.5 13.5 1 V12.5 H0.5 Z" fill="#f3d786" stroke="#dbb057" stroke-width="1"/><path d="M1.5 3 H12.5 V12 H1.5 Z" fill="#f8e6a6"/><path d="M8.6 1.4 H12.5 V2.6 H8 Z" fill="#fdf6d4"/><rect x="10" y="1.2" width="2.2" height="1.2" fill="#4d9cf0"/><rect x="8.6" y="1.2" width="1.6" height="1.2" fill="#ffffff"/></svg>
<span class="t" style="left:68px;top:676px;font-size:12px;line-height:12px;color:#000;letter-spacing:-0.452px;">Group Policy Results</span>
<svg style="left:0;top:0" width="260" height="724" shape-rendering="crispEdges"><rect x="85" y="82" width="3" height="5" fill="#f9f7f5"/><rect x="88" y="82" width="5" height="5" fill="#c5c1cc"/><rect x="93" y="82" width="5" height="5" fill="#d6d0d3"/><rect x="98" y="82" width="5" height="5" fill="#e7e7e7"/><rect x="103" y="82" width="5" height="5" fill="#d0c9c8"/><rect x="108" y="82" width="5" height="5" fill="#ebe7e9"/><rect x="113" y="82" width="5" height="5" fill="#c2c2c2"/><rect x="118" y="82" width="5" height="5" fill="#b7bac1"/><rect x="123" y="82" width="5" height="5" fill="#ebecee"/><rect x="128" y="82" width="5" height="5" fill="#c2b8be"/><rect x="133" y="82" width="5" height="5" fill="#e9e9e9"/><rect x="138" y="82" width="5" height="5" fill="#e1dfe5"/><rect x="143" y="82" width="5" height="5" fill="#e1e2e5"/><rect x="148" y="82" width="5" height="5" fill="#d7d7d7"/><rect x="153" y="82" width="5" height="5" fill="#e9f1f8"/><rect x="85" y="87" width="3" height="5" fill="#e6dcd6"/><rect x="88" y="87" width="5" height="5" fill="#aa9fa3"/><rect x="93" y="87" width="5" height="5" fill="#96858e"/><rect x="98" y="87" width="5" height="5" fill="#afafaf"/><rect x="103" y="87" width="5" height="5" fill="#acafb8"/><rect x="108" y="87" width="5" height="5" fill="#9a9a9a"/><rect x="113" y="87" width="5" height="5" fill="#9fa3ad"/><rect x="118" y="87" width="5" height="5" fill="#a59896"/><rect x="123" y="87" width="5" height="5" fill="#b6adb0"/><rect x="128" y="87" width="5" height="5" fill="#aea1a8"/><rect x="133" y="87" width="5" height="5" fill="#afa4a8"/><rect x="138" y="87" width="5" height="5" fill="#7e8490"/><rect x="143" y="87" width="5" height="5" fill="#908186"/><rect x="148" y="87" width="5" height="5" fill="#b2adbc"/><rect x="153" y="87" width="5" height="5" fill="#e6eff8"/><rect x="88" y="92" width="5" height="5" fill="#efeded"/><rect x="103" y="92" width="5" height="5" fill="#e6e2e4"/><rect x="108" y="92" width="5" height="5" fill="#eeeeee"/><rect x="138" y="92" width="5" height="5" fill="#e0e0e0"/><rect x="148" y="92" width="5" height="5" fill="#e6e2e2"/><rect x="153" y="92" width="5" height="5" fill="#f7fafc"/><rect x="103" y="118" width="5" height="5" fill="#f5f2f0"/><rect x="108" y="118" width="5" height="5" fill="#b6bac1"/><rect x="113" y="118" width="5" height="5" fill="#e8e9ec"/><rect x="118" y="118" width="5" height="5" fill="#f9f9f9"/><rect x="123" y="118" width="5" height="5" fill="#bdb2b9"/><rect x="128" y="118" width="5" height="5" fill="#d5d0cf"/><rect x="133" y="118" width="5" height="5" fill="#e5e2e3"/><rect x="138" y="118" width="5" height="5" fill="#e1e1e1"/><rect x="143" y="118" width="5" height="5" fill="#e9e7ec"/><rect x="148" y="118" width="5" height="5" fill="#eeeced"/><rect x="153" y="118" width="5" height="5" fill="#f8fafd"/><rect x="103" y="123" width="5" height="5" fill="#d6c4bc"/><rect x="108" y="123" width="5" height="5" fill="#9c8f94"/><rect x="113" y="123" width="5" height="5" fill="#a1a1a1"/><rect x="118" y="123" width="5" height="5" fill="#e9e9e9"/><rect x="123" y="123" width="5" height="5" fill="#a49fb0"/><rect x="128" y="123" width="5" height="5" fill="#939393"/><rect x="133" y="123" width="5" height="5" fill="#a3a6b0"/><rect x="138" y="123" width="5" height="5" fill="#939393"/><rect x="143" y="123" width="5" height="5" fill="#b4aaad"/><rect x="148" y="123" width="5" height="5" fill="#a6a6a6"/><rect x="153" y="123" width="5" height="5" fill="#e6eff7"/><rect x="113" y="128" width="5" height="5" fill="#e3e4e7"/><rect x="123" y="128" width="5" height="5" fill="#dddddd"/><rect x="148" y="128" width="5" height="5" fill="#e9e6e7"/><rect x="108" y="133" width="5" height="5" fill="#f7f5f6"/><rect x="118" y="133" width="5" height="5" fill="#f6f7f8"/><rect x="128" y="133" width="5" height="5" fill="#f1efef"/><rect x="138" y="133" width="5" height="5" fill="#eeeff0"/><rect x="148" y="133" width="5" height="5" fill="#f3f3f3"/><rect x="153" y="133" width="5" height="5" fill="#eaeaea"/><rect x="168" y="133" width="5" height="5" fill="#f7f7f8"/><rect x="178" y="133" width="5" height="5" fill="#ebebeb"/><rect x="203" y="133" width="5" height="5" fill="#efedee"/><rect x="103" y="138" width="5" height="5" fill="#eae1dd"/><rect x="108" y="138" width="5" height="5" fill="#babdc4"/><rect x="113" y="138" width="5" height="5" fill="#c9c0c5"/><rect x="118" y="138" width="5" height="5" fill="#cecbd4"/><rect x="123" y="138" width="5" height="5" fill="#cbc4c3"/><rect x="128" y="138" width="5" height="5" fill="#b8b4c1"/><rect x="133" y="138" width="5" height="5" fill="#b0b4bb"/><rect x="138" y="138" width="5" height="5" fill="#c2b9b8"/><rect x="143" y="138" width="5" height="5" fill="#b6b9c0"/><rect x="148" y="138" width="5" height="5" fill="#bfb5bb"/><rect x="153" y="138" width="5" height="5" fill="#bdb2b8"/><rect x="158" y="138" width="5" height="5" fill="#f0f0f0"/><rect x="163" y="138" width="5" height="5" fill="#c1b8bb"/><rect x="168" y="138" width="5" height="5" fill="#bec1c7"/><rect x="173" y="138" width="5" height="5" fill="#c3c3c3"/><rect x="178" y="138" width="5" height="5" fill="#acacac"/><rect x="183" y="138" width="5" height="5" fill="#ced0d5"/><rect x="188" y="138" width="5" height="5" fill="#c7c7c7"/><rect x="193" y="138" width="5" height="5" fill="#c3c3c3"/><rect x="198" y="138" width="5" height="5" fill="#f0f0f2"/><rect x="203" y="138" width="5" height="5" fill="#b4a9a8"/><rect x="208" y="138" width="5" height="5" fill="#c1c3ca"/><rect x="213" y="138" width="5" height="5" fill="#ecf2f9"/><rect x="103" y="143" width="5" height="5" fill="#f0e9e6"/><rect x="108" y="143" width="5" height="5" fill="#b8bbc2"/><rect x="113" y="143" width="5" height="5" fill="#c3c6cc"/><rect x="118" y="143" width="5" height="5" fill="#d3cdcf"/><rect x="123" y="143" width="5" height="5" fill="#c4c4c4"/><rect x="128" y="143" width="5" height="5" fill="#b2b6bd"/><rect x="133" y="143" width="5" height="5" fill="#c7bfbe"/><rect x="138" y="143" width="5" height="5" fill="#ced0d5"/><rect x="143" y="143" width="5" height="5" fill="#c6bebd"/><rect x="148" y="143" width="5" height="5" fill="#cbcdd2"/><rect x="153" y="143" width="5" height="5" fill="#c8cad0"/><rect x="158" y="143" width="5" height="5" fill="#f3f4f5"/><rect x="163" y="143" width="5" height="5" fill="#cec8ca"/><rect x="168" y="143" width="5" height="5" fill="#c4c7cc"/><rect x="173" y="143" width="5" height="5" fill="#d1cbca"/><rect x="178" y="143" width="5" height="5" fill="#c5c1cd"/><rect x="183" y="143" width="5" height="5" fill="#d5d3db"/><rect x="188" y="143" width="5" height="5" fill="#cfcbd5"/><rect x="193" y="143" width="5" height="5" fill="#cbc5c7"/><rect x="198" y="143" width="5" height="5" fill="#f5f3f3"/><rect x="203" y="143" width="5" height="5" fill="#cdcdcd"/><rect x="208" y="143" width="5" height="5" fill="#cdc5ca"/><rect x="213" y="143" width="5" height="5" fill="#eef4fa"/><rect x="108" y="148" width="5" height="5" fill="#f9f8f8"/><rect x="168" y="148" width="5" height="5" fill="#f8f9f9"/><rect x="178" y="148" width="5" height="5" fill="#f5f4f4"/><rect x="108" y="153" width="5" height="5" fill="#dfdada"/><rect x="113" y="153" width="5" height="5" fill="#e2e3e6"/><rect x="118" y="153" width="5" height="5" fill="#dcd7d7"/><rect x="123" y="153" width="5" height="5" fill="#f9f8f8"/><rect x="128" y="153" width="5" height="5" fill="#f9f8fa"/><rect x="138" y="153" width="5" height="5" fill="#d5d7db"/><rect x="143" y="153" width="5" height="5" fill="#cec7ca"/><rect x="148" y="153" width="5" height="5" fill="#f8f8f8"/><rect x="153" y="153" width="5" height="5" fill="#dcd7da"/><rect x="158" y="153" width="5" height="5" fill="#f9fafa"/><rect x="163" y="153" width="5" height="5" fill="#f9f9f9"/><rect x="168" y="153" width="5" height="5" fill="#f8f8f8"/><rect x="173" y="153" width="5" height="5" fill="#f9fafa"/><rect x="178" y="153" width="5" height="5" fill="#fafafa"/><rect x="183" y="153" width="5" height="5" fill="#dad5d5"/><rect x="188" y="153" width="5" height="5" fill="#e0dcdd"/><rect x="193" y="153" width="5" height="5" fill="#d3d3d3"/><rect x="198" y="153" width="5" height="5" fill="#fafafa"/><rect x="203" y="153" width="5" height="5" fill="#f9f9fa"/><rect x="103" y="158" width="5" height="5" fill="#e2d6d0"/><rect x="108" y="158" width="5" height="5" fill="#a3979b"/><rect x="113" y="158" width="5" height="5" fill="#a2969a"/><rect x="118" y="158" width="5" height="5" fill="#a0a4ad"/><rect x="123" y="158" width="5" height="5" fill="#a3979b"/><rect x="128" y="158" width="5" height="5" fill="#aba0a3"/><rect x="133" y="158" width="5" height="5" fill="#e9e9e9"/><rect x="138" y="158" width="5" height="5" fill="#8d8d8d"/><rect x="143" y="158" width="5" height="5" fill="#b4afbe"/><rect x="148" y="158" width="5" height="5" fill="#908186"/><rect x="153" y="158" width="5" height="5" fill="#b9adb4"/><rect x="158" y="158" width="5" height="5" fill="#b0b3bb"/><rect x="163" y="158" width="5" height="5" fill="#b5b5b5"/><rect x="168" y="158" width="5" height="5" fill="#a79b9f"/><rect x="173" y="158" width="5" height="5" fill="#a799a1"/><rect x="178" y="158" width="5" height="5" fill="#b4a9a8"/><rect x="183" y="158" width="5" height="5" fill="#a5a9b2"/><rect x="188" y="158" width="5" height="5" fill="#949494"/><rect x="193" y="158" width="5" height="5" fill="#c2b8be"/><rect x="198" y="158" width="5" height="5" fill="#c5bbc1"/><rect x="203" y="158" width="5" height="5" fill="#a2a2a2"/><rect x="208" y="158" width="4" height="5" fill="#e2ecf6"/><rect x="103" y="163" width="5" height="5" fill="#f9f7f6"/><rect x="108" y="163" width="5" height="5" fill="#e9e6e8"/><rect x="113" y="163" width="5" height="5" fill="#ebe8ea"/><rect x="118" y="163" width="5" height="5" fill="#edeef0"/><rect x="123" y="163" width="5" height="5" fill="#ebebeb"/><rect x="128" y="163" width="5" height="5" fill="#ecebee"/><rect x="138" y="163" width="5" height="5" fill="#cfc8c7"/><rect x="143" y="163" width="5" height="5" fill="#d0d0d0"/><rect x="148" y="163" width="5" height="5" fill="#cacdd2"/><rect x="153" y="163" width="5" height="5" fill="#eeeff0"/><rect x="158" y="163" width="5" height="5" fill="#d6d7db"/><rect x="163" y="163" width="5" height="5" fill="#efefef"/><rect x="168" y="163" width="5" height="5" fill="#dfdadd"/><rect x="173" y="163" width="5" height="5" fill="#ededed"/><rect x="178" y="163" width="5" height="5" fill="#eeeced"/><rect x="183" y="163" width="5" height="5" fill="#ebeced"/><rect x="188" y="163" width="5" height="5" fill="#ece9ea"/><rect x="193" y="163" width="5" height="5" fill="#ececee"/><rect x="198" y="163" width="5" height="5" fill="#edeef0"/><rect x="203" y="163" width="5" height="5" fill="#d3d3d3"/><rect x="208" y="163" width="4" height="5" fill="#f8fbfd"/><rect x="128" y="168" width="5" height="5" fill="#fbfbfb"/><rect x="148" y="168" width="5" height="5" fill="#fbfbfb"/><rect x="158" y="168" width="5" height="5" fill="#fafafb"/><rect x="103" y="173" width="5" height="5" fill="#e9dfdb"/><rect x="108" y="173" width="5" height="5" fill="#b8b8b8"/><rect x="113" y="173" width="5" height="5" fill="#b2b5bd"/><rect x="118" y="173" width="5" height="5" fill="#dfe0e3"/><rect x="123" y="173" width="5" height="5" fill="#d2d4d8"/><rect x="128" y="173" width="5" height="5" fill="#babcc3"/><rect x="133" y="173" width="5" height="5" fill="#dadada"/><rect x="138" y="173" width="5" height="5" fill="#b5a9b0"/><rect x="143" y="173" width="5" height="5" fill="#dad7de"/><rect x="148" y="173" width="5" height="5" fill="#afafaf"/><rect x="153" y="173" width="5" height="5" fill="#f5f6f7"/><rect x="158" y="173" width="5" height="5" fill="#b5a9b0"/><rect x="163" y="173" width="5" height="5" fill="#cdc5ca"/><rect x="168" y="173" width="4" height="5" fill="#e6eff8"/><rect x="103" y="178" width="5" height="5" fill="#ece4e0"/><rect x="108" y="178" width="5" height="5" fill="#b5aaa9"/><rect x="113" y="178" width="5" height="5" fill="#a2a2a2"/><rect x="118" y="178" width="5" height="5" fill="#c5c7cd"/><rect x="123" y="178" width="5" height="5" fill="#c5bcc1"/><rect x="128" y="178" width="5" height="5" fill="#b9b9b9"/><rect x="133" y="178" width="5" height="5" fill="#b7bac1"/><rect x="138" y="178" width="5" height="5" fill="#9fa3ac"/><rect x="143" y="178" width="5" height="5" fill="#cbc3c8"/><rect x="148" y="178" width="5" height="5" fill="#b2a8a6"/><rect x="153" y="178" width="5" height="5" fill="#eeeeee"/><rect x="158" y="178" width="5" height="5" fill="#bfbfbf"/><rect x="163" y="178" width="5" height="5" fill="#b3b6be"/><rect x="168" y="178" width="4" height="5" fill="#e8f0f8"/><rect x="108" y="183" width="5" height="5" fill="#f2f0f0"/><rect x="133" y="183" width="5" height="5" fill="#f4f3f3"/><rect x="103" y="188" width="5" height="5" fill="#f8f5f4"/><rect x="128" y="188" width="5" height="5" fill="#dcdee1"/><rect x="148" y="188" width="5" height="5" fill="#dddddd"/><rect x="163" y="188" width="5" height="5" fill="#f0eff2"/><rect x="168" y="188" width="5" height="5" fill="#efefef"/><rect x="173" y="188" width="5" height="5" fill="#f5f9fc"/><rect x="103" y="193" width="5" height="5" fill="#e4d8d2"/><rect x="108" y="193" width="5" height="5" fill="#b0b0b0"/><rect x="113" y="193" width="5" height="5" fill="#b1a6aa"/><rect x="118" y="193" width="5" height="5" fill="#9a9a9a"/><rect x="123" y="193" width="5" height="5" fill="#aeb1b9"/><rect x="128" y="193" width="5" height="5" fill="#bdbdbd"/><rect x="133" y="193" width="5" height="5" fill="#b7bac1"/><rect x="138" y="193" width="5" height="5" fill="#a2a2a2"/><rect x="143" y="193" width="5" height="5" fill="#c8c4cf"/><rect x="148" y="193" width="5" height="5" fill="#bdb4b3"/><rect x="153" y="193" width="5" height="5" fill="#9f8f98"/><rect x="158" y="193" width="5" height="5" fill="#9a9ea8"/><rect x="163" y="193" width="5" height="5" fill="#a59997"/><rect x="168" y="193" width="5" height="5" fill="#c3bbbd"/><rect x="173" y="193" width="5" height="5" fill="#dde9f5"/><rect x="103" y="198" width="5" height="5" fill="#eae1dc"/><rect x="108" y="198" width="5" height="5" fill="#b6b6b6"/><rect x="113" y="198" width="5" height="5" fill="#d7d7d7"/><rect x="118" y="198" width="5" height="5" fill="#bdb2b8"/><rect x="123" y="198" width="5" height="5" fill="#dddee2"/><rect x="128" y="198" width="5" height="5" fill="#dedede"/><rect x="133" y="198" width="5" height="5" fill="#dedede"/><rect x="138" y="198" width="5" height="5" fill="#d8dade"/><rect x="143" y="198" width="5" height="5" fill="#e4e0e0"/><rect x="148" y="198" width="5" height="5" fill="#e1ddde"/><rect x="153" y="198" width="5" height="5" fill="#d1cbca"/><rect x="158" y="198" width="5" height="5" fill="#bbbbbb"/><rect x="163" y="198" width="5" height="5" fill="#c1b7bc"/><rect x="168" y="198" width="5" height="5" fill="#e2e0e6"/><rect x="173" y="198" width="5" height="5" fill="#f1f6fb"/><rect x="103" y="208" width="5" height="5" fill="#f8f5f4"/><rect x="108" y="208" width="5" height="5" fill="#ccc8d2"/><rect x="113" y="208" width="5" height="5" fill="#fafafb"/><rect x="118" y="208" width="5" height="5" fill="#cdcfd4"/><rect x="123" y="208" width="5" height="5" fill="#e8e7eb"/><rect x="128" y="208" width="5" height="5" fill="#d0d0d0"/><rect x="133" y="208" width="5" height="5" fill="#e7e3e5"/><rect x="138" y="208" width="5" height="5" fill="#e5e6e9"/><rect x="143" y="208" width="5" height="5" fill="#dfdfdf"/><rect x="148" y="208" width="5" height="5" fill="#ded8db"/><rect x="153" y="208" width="5" height="5" fill="#e9e6e6"/><rect x="158" y="208" width="5" height="5" fill="#faf9fa"/><rect x="163" y="208" width="5" height="5" fill="#bdbdbd"/><rect x="168" y="208" width="5" height="5" fill="#e8e4e6"/><rect x="173" y="208" width="5" height="5" fill="#f0f5fa"/><rect x="103" y="213" width="5" height="5" fill="#e8dfda"/><rect x="108" y="213" width="5" height="5" fill="#9b8d92"/><rect x="113" y="213" width="5" height="5" fill="#eeecf0"/><rect x="118" y="213" width="5" height="5" fill="#a89c9a"/><rect x="123" y="213" width="5" height="5" fill="#9fa4ad"/><rect x="128" y="213" width="5" height="5" fill="#a29593"/><rect x="133" y="213" width="5" height="5" fill="#959595"/><rect x="138" y="213" width="5" height="5" fill="#8d919d"/><rect x="143" y="213" width="5" height="5" fill="#a5999d"/><rect x="148" y="213" width="5" height="5" fill="#b8b3c1"/><rect x="153" y="213" width="5" height="5" fill="#a4a4a4"/><rect x="158" y="213" width="5" height="5" fill="#eaebed"/><rect x="163" y="213" width="5" height="5" fill="#b3a9a7"/><rect x="168" y="213" width="5" height="5" fill="#a2a2a2"/><rect x="173" y="213" width="5" height="5" fill="#e4edf7"/><rect x="128" y="218" width="5" height="5" fill="#e7e8eb"/><rect x="143" y="218" width="5" height="5" fill="#e0e0e0"/><rect x="153" y="218" width="5" height="5" fill="#e9e5e7"/><rect x="108" y="223" width="5" height="5" fill="#f1f1f1"/><rect x="113" y="223" width="5" height="5" fill="#eeeff0"/><rect x="128" y="223" width="5" height="5" fill="#f8f7f6"/><rect x="143" y="223" width="5" height="5" fill="#f5f4f4"/><rect x="148" y="223" width="5" height="5" fill="#eaeaea"/><rect x="103" y="228" width="5" height="5" fill="#ece4df"/><rect x="108" y="228" width="5" height="5" fill="#aeaeae"/><rect x="113" y="228" width="5" height="5" fill="#adadad"/><rect x="118" y="228" width="5" height="5" fill="#c4c4c4"/><rect x="123" y="228" width="5" height="5" fill="#c8c0c3"/><rect x="128" y="228" width="5" height="5" fill="#ccc5c4"/><rect x="133" y="228" width="5" height="5" fill="#bfb4ba"/><rect x="138" y="228" width="5" height="5" fill="#bfb6b4"/><rect x="143" y="228" width="5" height="5" fill="#a7a7a7"/><rect x="148" y="228" width="5" height="5" fill="#b1acbb"/><rect x="153" y="228" width="5" height="5" fill="#e9f1f8"/><rect x="103" y="233" width="5" height="5" fill="#ece4e0"/><rect x="108" y="233" width="5" height="5" fill="#cbcbcb"/><rect x="113" y="233" width="5" height="5" fill="#c7c7c7"/><rect x="118" y="233" width="5" height="5" fill="#c5c7cd"/><rect x="123" y="233" width="5" height="5" fill="#c7bfbe"/><rect x="128" y="233" width="5" height="5" fill="#bbb6c4"/><rect x="133" y="233" width="5" height="5" fill="#c9c1c6"/><rect x="138" y="233" width="5" height="5" fill="#b9b4c2"/><rect x="143" y="233" width="5" height="5" fill="#b7aeac"/><rect x="148" y="233" width="5" height="5" fill="#c9c9c9"/><rect x="153" y="233" width="5" height="5" fill="#f0f5fa"/><rect x="128" y="238" width="5" height="5" fill="#f3f3f3"/><rect x="138" y="238" width="5" height="5" fill="#f6f5f6"/><rect x="143" y="238" width="5" height="5" fill="#f5f5f6"/><rect x="103" y="243" width="5" height="5" fill="#f6f2f0"/><rect x="108" y="243" width="5" height="5" fill="#d7d4dc"/><rect x="113" y="243" width="5" height="5" fill="#f9f8f8"/><rect x="118" y="243" width="5" height="5" fill="#d3d4d9"/><rect x="123" y="243" width="5" height="5" fill="#d7d5dc"/><rect x="133" y="243" width="5" height="5" fill="#f9f9f9"/><rect x="138" y="243" width="5" height="5" fill="#fafafa"/><rect x="143" y="243" width="5" height="5" fill="#fafafa"/><rect x="148" y="243" width="5" height="5" fill="#d8d1d5"/><rect x="153" y="243" width="5" height="5" fill="#f3f7fb"/><rect x="103" y="248" width="5" height="5" fill="#e4d8d3"/><rect x="108" y="248" width="5" height="5" fill="#9da1ab"/><rect x="113" y="248" width="5" height="5" fill="#878787"/><rect x="118" y="248" width="5" height="5" fill="#b1a7ab"/><rect x="123" y="248" width="5" height="5" fill="#aeb1b9"/><rect x="128" y="248" width="5" height="5" fill="#eeecec"/><rect x="133" y="248" width="5" height="5" fill="#aca2a5"/><rect x="138" y="248" width="5" height="5" fill="#a99ea2"/><rect x="143" y="248" width="5" height="5" fill="#bbbdc4"/><rect x="148" y="248" width="5" height="5" fill="#848484"/><rect x="153" y="248" width="5" height="5" fill="#dfeaf5"/><rect x="103" y="253" width="5" height="5" fill="#f9f6f5"/><rect x="108" y="253" width="5" height="5" fill="#f0eff2"/><rect x="113" y="253" width="5" height="5" fill="#eeecec"/><rect x="118" y="253" width="5" height="5" fill="#ededed"/><rect x="123" y="253" width="5" height="5" fill="#eeeef0"/><rect x="128" y="253" width="5" height="5" fill="#fbfafb"/><rect x="133" y="253" width="5" height="5" fill="#d2d2d2"/><rect x="138" y="253" width="5" height="5" fill="#f0eeef"/><rect x="143" y="253" width="5" height="5" fill="#f1f1f1"/><rect x="148" y="253" width="5" height="5" fill="#e9eaec"/><rect x="153" y="253" width="5" height="5" fill="#f4f8fb"/><rect x="108" y="258" width="5" height="5" fill="#fbfbfa"/><rect x="128" y="258" width="5" height="5" fill="#fbfbfb"/><rect x="148" y="258" width="5" height="5" fill="#fafafb"/><rect x="103" y="263" width="5" height="5" fill="#eee7e3"/><rect x="108" y="263" width="5" height="5" fill="#b6b1c0"/><rect x="113" y="263" width="5" height="5" fill="#c3c3c3"/><rect x="118" y="263" width="5" height="5" fill="#d0cacc"/><rect x="123" y="263" width="5" height="5" fill="#dcd7da"/><rect x="128" y="263" width="5" height="5" fill="#b0b4bb"/><rect x="133" y="263" width="5" height="5" fill="#dbdbdb"/><rect x="138" y="263" width="5" height="5" fill="#d1d1d1"/><rect x="143" y="263" width="5" height="5" fill="#b0abba"/><rect x="148" y="263" width="5" height="5" fill="#b0b0b0"/><rect x="153" y="263" width="5" height="5" fill="#dad4d4"/><rect x="158" y="263" width="5" height="5" fill="#cfcfcf"/><rect x="163" y="263" width="4" height="5" fill="#f0f5fa"/><rect x="103" y="268" width="5" height="5" fill="#e5dbd5"/><rect x="108" y="268" width="5" height="5" fill="#afafaf"/><rect x="113" y="268" width="5" height="5" fill="#b4abae"/><rect x="118" y="268" width="5" height="5" fill="#c4c0cc"/><rect x="123" y="268" width="5" height="5" fill="#c4c0cb"/><rect x="128" y="268" width="5" height="5" fill="#c5c5c5"/><rect x="133" y="268" width="5" height="5" fill="#b5b5b5"/><rect x="138" y="268" width="5" height="5" fill="#b6b1c0"/><rect x="143" y="268" width="5" height="5" fill="#a4a8b1"/><rect x="148" y="268" width="5" height="5" fill="#bfbfbf"/><rect x="153" y="268" width="5" height="5" fill="#c1b8b7"/><rect x="158" y="268" width="5" height="5" fill="#c1b9bc"/><rect x="163" y="268" width="4" height="5" fill="#deeaf5"/><rect x="113" y="273" width="5" height="5" fill="#f1f1f1"/><rect x="133" y="273" width="5" height="5" fill="#efedee"/><rect x="105" y="278" width="3" height="5" fill="#f9f7f6"/><rect x="108" y="278" width="5" height="5" fill="#eceaeb"/><rect x="123" y="278" width="5" height="5" fill="#f1f0f2"/><rect x="133" y="278" width="5" height="5" fill="#e6e6e6"/><rect x="143" y="278" width="5" height="5" fill="#e7e4e4"/><rect x="153" y="278" width="5" height="5" fill="#d7d7d7"/><rect x="158" y="278" width="5" height="5" fill="#e0dee4"/><rect x="168" y="278" width="5" height="5" fill="#e0e1e4"/><rect x="105" y="283" width="3" height="5" fill="#e8dfda"/><rect x="108" y="283" width="5" height="5" fill="#b2adbc"/><rect x="113" y="283" width="5" height="5" fill="#a0a4ad"/><rect x="118" y="283" width="5" height="5" fill="#b2b5bd"/><rect x="123" y="283" width="5" height="5" fill="#b3b6bd"/><rect x="128" y="283" width="5" height="5" fill="#c4bcbf"/><rect x="133" y="283" width="5" height="5" fill="#b0a3ab"/><rect x="138" y="283" width="5" height="5" fill="#c1b9bc"/><rect x="143" y="283" width="5" height="5" fill="#afa4a8"/><rect x="148" y="283" width="5" height="5" fill="#a4a4a4"/><rect x="153" y="283" width="5" height="5" fill="#a2a5af"/><rect x="158" y="283" width="5" height="5" fill="#b0abba"/><rect x="163" y="283" width="5" height="5" fill="#eeeff0"/><rect x="168" y="283" width="5" height="5" fill="#9ca1aa"/><rect x="173" y="283" width="1" height="5" fill="#e3edf7"/><rect x="105" y="288" width="3" height="5" fill="#f6f2f0"/><rect x="108" y="288" width="5" height="5" fill="#e6e3e5"/><rect x="113" y="288" width="5" height="5" fill="#d2d2d2"/><rect x="118" y="288" width="5" height="5" fill="#c8c1c4"/><rect x="123" y="288" width="5" height="5" fill="#d8d2d6"/><rect x="128" y="288" width="5" height="5" fill="#e4e1e0"/><rect x="133" y="288" width="5" height="5" fill="#cacdd2"/><rect x="138" y="288" width="5" height="5" fill="#e0dee4"/><rect x="143" y="288" width="5" height="5" fill="#e0dbde"/><rect x="148" y="288" width="5" height="5" fill="#d8d8d8"/><rect x="153" y="288" width="5" height="5" fill="#c3b9bf"/><rect x="158" y="288" width="5" height="5" fill="#cdcdcd"/><rect x="163" y="288" width="5" height="5" fill="#f7f6f5"/><rect x="168" y="288" width="5" height="5" fill="#dcdde1"/><rect x="173" y="288" width="1" height="5" fill="#f1f6fb"/><rect x="105" y="298" width="3" height="5" fill="#f8f6f5"/><rect x="108" y="298" width="5" height="5" fill="#e9e9e9"/><rect x="113" y="298" width="5" height="5" fill="#d5cfd1"/><rect x="118" y="298" width="5" height="5" fill="#e0e0e0"/><rect x="123" y="298" width="5" height="5" fill="#faf9f9"/><rect x="128" y="298" width="5" height="5" fill="#e8e9eb"/><rect x="133" y="298" width="5" height="5" fill="#ececec"/><rect x="138" y="298" width="5" height="5" fill="#c2b9b8"/><rect x="143" y="298" width="5" height="5" fill="#e6e3e4"/><rect x="148" y="298" width="5" height="5" fill="#f9f9fa"/><rect x="153" y="298" width="5" height="5" fill="#cfc8cc"/><rect x="158" y="298" width="5" height="5" fill="#b3b3b3"/><rect x="163" y="298" width="5" height="5" fill="#e5e6e8"/><rect x="168" y="298" width="5" height="5" fill="#d0d0d0"/><rect x="173" y="298" width="5" height="5" fill="#e7e7e7"/><rect x="178" y="298" width="5" height="5" fill="#ddd8db"/><rect x="183" y="298" width="5" height="5" fill="#edeaec"/><rect x="188" y="298" width="5" height="5" fill="#dedede"/><rect x="193" y="298" width="1" height="5" fill="#ebf2f9"/><rect x="105" y="303" width="3" height="5" fill="#e2d6d0"/><rect x="108" y="303" width="5" height="5" fill="#a8a8a8"/><rect x="113" y="303" width="5" height="5" fill="#9ea2ac"/><rect x="118" y="303" width="5" height="5" fill="#a3949c"/><rect x="123" y="303" width="5" height="5" fill="#ebe9ed"/><rect x="128" y="303" width="5" height="5" fill="#afa4a7"/><rect x="133" y="303" width="5" height="5" fill="#bbb2b0"/><rect x="138" y="303" width="5" height="5" fill="#aea3a7"/><rect x="143" y="303" width="5" height="5" fill="#a8abb4"/><rect x="148" y="303" width="5" height="5" fill="#eeecec"/><rect x="153" y="303" width="5" height="5" fill="#b1a7aa"/><rect x="158" y="303" width="5" height="5" fill="#afa4a8"/><rect x="163" y="303" width="5" height="5" fill="#a59896"/><rect x="168" y="303" width="5" height="5" fill="#a4a8b1"/><rect x="173" y="303" width="5" height="5" fill="#b8bbc2"/><rect x="178" y="303" width="5" height="5" fill="#bbb7c4"/><rect x="183" y="303" width="5" height="5" fill="#afa4a8"/><rect x="188" y="303" width="5" height="5" fill="#858585"/><rect x="193" y="303" width="1" height="5" fill="#e2ecf6"/><rect x="105" y="308" width="3" height="5" fill="#faf8f7"/><rect x="118" y="308" width="5" height="5" fill="#e6e3e4"/><rect x="128" y="308" width="5" height="5" fill="#edeaea"/><rect x="133" y="308" width="5" height="5" fill="#e3dfde"/><rect x="153" y="308" width="5" height="5" fill="#dfdfdf"/><rect x="113" y="313" width="5" height="5" fill="#f4f2f3"/><rect x="118" y="313" width="5" height="5" fill="#eeedf0"/><rect x="128" y="313" width="5" height="5" fill="#eeeff0"/><rect x="133" y="313" width="5" height="5" fill="#ebe8e7"/><rect x="143" y="313" width="5" height="5" fill="#ececec"/><rect x="148" y="313" width="5" height="5" fill="#f6f5f5"/><rect x="105" y="318" width="3" height="5" fill="#ebe2de"/><rect x="108" y="318" width="5" height="5" fill="#d2cbcf"/><rect x="113" y="318" width="5" height="5" fill="#b6b6b6"/><rect x="118" y="318" width="5" height="5" fill="#a69b9f"/><rect x="123" y="318" width="5" height="5" fill="#c7c3ce"/><rect x="128" y="318" width="5" height="5" fill="#aca19f"/><rect x="133" y="318" width="5" height="5" fill="#b7abb2"/><rect x="138" y="318" width="5" height="5" fill="#c9cbd1"/><rect x="143" y="318" width="5" height="5" fill="#bdb4b7"/><rect x="148" y="318" width="5" height="5" fill="#bbbec4"/><rect x="153" y="318" width="5" height="5" fill="#c3bbbd"/><rect x="158" y="318" width="5" height="5" fill="#c5bdc0"/><rect x="163" y="318" width="1" height="5" fill="#e5eef7"/><rect x="105" y="323" width="3" height="5" fill="#efe8e4"/><rect x="108" y="323" width="5" height="5" fill="#d0cacc"/><rect x="113" y="323" width="5" height="5" fill="#caccd1"/><rect x="118" y="323" width="5" height="5" fill="#b7adb1"/><rect x="123" y="323" width="5" height="5" fill="#cfc8ca"/><rect x="128" y="323" width="5" height="5" fill="#c0c0c0"/><rect x="133" y="323" width="5" height="5" fill="#cacaca"/><rect x="138" y="323" width="5" height="5" fill="#cccccc"/><rect x="143" y="323" width="5" height="5" fill="#d0cac9"/><rect x="148" y="323" width="5" height="5" fill="#cbcbcb"/><rect x="153" y="323" width="5" height="5" fill="#bbbbbb"/><rect x="158" y="323" width="5" height="5" fill="#b0b4bb"/><rect x="163" y="323" width="1" height="5" fill="#eaf1f9"/><rect x="118" y="328" width="5" height="5" fill="#f7f7f7"/><rect x="158" y="328" width="5" height="5" fill="#f8f8f8"/><rect x="108" y="333" width="5" height="5" fill="#ddd8db"/><rect x="113" y="333" width="5" height="5" fill="#f9f9f9"/><rect x="118" y="333" width="5" height="5" fill="#e0e1e4"/><rect x="123" y="333" width="5" height="5" fill="#faf9f9"/><rect x="128" y="333" width="5" height="5" fill="#e8e7eb"/><rect x="133" y="333" width="5" height="5" fill="#fbfafa"/><rect x="138" y="333" width="5" height="5" fill="#f8f7f8"/><rect x="143" y="333" width="5" height="5" fill="#dfdbdc"/><rect x="148" y="333" width="5" height="5" fill="#fbfafb"/><rect x="153" y="333" width="5" height="5" fill="#d8dade"/><rect x="158" y="333" width="5" height="5" fill="#f9f9f9"/><rect x="163" y="333" width="5" height="5" fill="#cfcfcf"/><rect x="168" y="333" width="5" height="5" fill="#f9f9f9"/><rect x="105" y="338" width="3" height="5" fill="#e5dad4"/><rect x="108" y="338" width="5" height="5" fill="#a6a6a6"/><rect x="113" y="338" width="5" height="5" fill="#a6a9b2"/><rect x="118" y="338" width="5" height="5" fill="#a7a2b3"/><rect x="123" y="338" width="5" height="5" fill="#9a9ea8"/><rect x="128" y="338" width="5" height="5" fill="#a6a6a6"/><rect x="133" y="338" width="5" height="5" fill="#baaeb5"/><rect x="138" y="338" width="5" height="5" fill="#868a97"/><rect x="143" y="338" width="5" height="5" fill="#959595"/><rect x="148" y="338" width="5" height="5" fill="#a8abb4"/><rect x="153" y="338" width="5" height="5" fill="#b0b0b0"/><rect x="158" y="338" width="5" height="5" fill="#a1a5ae"/><rect x="163" y="338" width="5" height="5" fill="#8e929e"/><rect x="168" y="338" width="5" height="5" fill="#838383"/><rect x="173" y="338" width="1" height="5" fill="#e9f1f8"/><rect x="105" y="343" width="3" height="5" fill="#f8f5f3"/><rect x="108" y="343" width="5" height="5" fill="#dad5d8"/><rect x="113" y="343" width="5" height="5" fill="#ececec"/><rect x="118" y="343" width="5" height="5" fill="#d2d2d2"/><rect x="123" y="343" width="5" height="5" fill="#eaeaea"/><rect x="128" y="343" width="5" height="5" fill="#f1eff1"/><rect x="133" y="343" width="5" height="5" fill="#eeeeee"/><rect x="138" y="343" width="5" height="5" fill="#e7e8ea"/><rect x="143" y="343" width="5" height="5" fill="#eeebed"/><rect x="148" y="343" width="5" height="5" fill="#eff0f1"/><rect x="153" y="343" width="5" height="5" fill="#ececec"/><rect x="158" y="343" width="5" height="5" fill="#d9d3d7"/><rect x="163" y="343" width="5" height="5" fill="#e4e6e8"/><rect x="168" y="343" width="5" height="5" fill="#d8d5dd"/><rect x="163" y="348" width="5" height="5" fill="#fafafa"/><rect x="168" y="348" width="5" height="5" fill="#faf9fa"/><rect x="105" y="353" width="3" height="5" fill="#f3edeb"/><rect x="108" y="353" width="5" height="5" fill="#d3cdcd"/><rect x="113" y="353" width="5" height="5" fill="#cfd1d6"/><rect x="118" y="353" width="5" height="5" fill="#d5d5d5"/><rect x="123" y="353" width="5" height="5" fill="#dcdcdc"/><rect x="128" y="353" width="5" height="5" fill="#c3c5cb"/><rect x="133" y="353" width="5" height="5" fill="#e0dbdd"/><rect x="138" y="353" width="5" height="5" fill="#f7f6f6"/><rect x="143" y="353" width="5" height="5" fill="#dbdde0"/><rect x="148" y="353" width="5" height="5" fill="#c8bfc4"/><rect x="153" y="353" width="5" height="5" fill="#f4f5f6"/><rect x="158" y="353" width="5" height="5" fill="#d5d5d5"/><rect x="163" y="353" width="5" height="5" fill="#b2a8ab"/><rect x="168" y="353" width="5" height="5" fill="#a2a2a2"/><rect x="173" y="353" width="1" height="5" fill="#f1f6fb"/><rect x="105" y="358" width="3" height="5" fill="#e6dbd6"/><rect x="108" y="358" width="5" height="5" fill="#bebebe"/><rect x="113" y="358" width="5" height="5" fill="#b8acb3"/><rect x="118" y="358" width="5" height="5" fill="#c3c3c3"/><rect x="123" y="358" width="5" height="5" fill="#c7c4ce"/><rect x="128" y="358" width="5" height="5" fill="#9398a2"/><rect x="133" y="358" width="5" height="5" fill="#c9c2c4"/><rect x="138" y="358" width="5" height="5" fill="#efeded"/><rect x="143" y="358" width="5" height="5" fill="#b6b6b6"/><rect x="148" y="358" width="5" height="5" fill="#c5c1cc"/><rect x="153" y="358" width="5" height="5" fill="#ececec"/><rect x="158" y="358" width="5" height="5" fill="#c6bfc1"/><rect x="163" y="358" width="5" height="5" fill="#ada2a5"/><rect x="168" y="358" width="5" height="5" fill="#a1a4ae"/><rect x="173" y="358" width="1" height="5" fill="#e1ecf6"/><rect x="143" y="363" width="5" height="5" fill="#edeaec"/><rect x="163" y="363" width="5" height="5" fill="#eaeaea"/><rect x="168" y="363" width="5" height="5" fill="#eff0f1"/><rect x="123" y="368" width="5" height="5" fill="#e9e5e7"/><rect x="138" y="368" width="5" height="5" fill="#eeeff1"/><rect x="143" y="368" width="1" height="5" fill="#f2f6fb"/><rect x="105" y="373" width="3" height="5" fill="#e2d6d0"/><rect x="108" y="373" width="5" height="5" fill="#b6adab"/><rect x="113" y="373" width="5" height="5" fill="#b0a5a3"/><rect x="118" y="373" width="5" height="5" fill="#c6bebd"/><rect x="123" y="373" width="5" height="5" fill="#a2969a"/><rect x="128" y="373" width="5" height="5" fill="#b2a5ac"/><rect x="133" y="373" width="5" height="5" fill="#adb1b9"/><rect x="138" y="373" width="5" height="5" fill="#c1b9bb"/><rect x="143" y="373" width="1" height="5" fill="#e5eef7"/><rect x="105" y="378" width="3" height="5" fill="#f3eeeb"/><rect x="108" y="378" width="5" height="5" fill="#dddee2"/><rect x="113" y="378" width="5" height="5" fill="#d3d5d9"/><rect x="118" y="378" width="5" height="5" fill="#e1dfe5"/><rect x="123" y="378" width="5" height="5" fill="#dad7df"/><rect x="128" y="378" width="5" height="5" fill="#d7d1d3"/><rect x="133" y="378" width="5" height="5" fill="#e0e1e4"/><rect x="138" y="378" width="5" height="5" fill="#dfdadd"/><rect x="143" y="378" width="1" height="5" fill="#f1f6fb"/><rect x="105" y="388" width="3" height="5" fill="#f9f6f5"/><rect x="108" y="388" width="5" height="5" fill="#c4bcbe"/><rect x="113" y="388" width="5" height="5" fill="#e6e6e6"/><rect x="118" y="388" width="5" height="5" fill="#e8e5e5"/><rect x="123" y="388" width="5" height="5" fill="#e3e4e7"/><rect x="128" y="388" width="5" height="5" fill="#cfd1d6"/><rect x="133" y="388" width="5" height="5" fill="#ebe7e9"/><rect x="138" y="388" width="5" height="5" fill="#eae8e9"/><rect x="143" y="388" width="5" height="5" fill="#ababab"/><rect x="148" y="388" width="5" height="5" fill="#edeaec"/><rect x="153" y="388" width="5" height="5" fill="#edecef"/><rect x="158" y="388" width="5" height="5" fill="#e9e9e9"/><rect x="163" y="388" width="5" height="5" fill="#eaebed"/><rect x="168" y="388" width="5" height="5" fill="#e6e6e6"/><rect x="173" y="388" width="5" height="5" fill="#c7c3ce"/><rect x="178" y="388" width="5" height="5" fill="#c1b9bb"/><rect x="183" y="388" width="5" height="5" fill="#ebecee"/><rect x="188" y="388" width="2" height="5" fill="#f8fafd"/><rect x="105" y="393" width="3" height="5" fill="#e4d8d3"/><rect x="108" y="393" width="5" height="5" fill="#aba09e"/><rect x="113" y="393" width="5" height="5" fill="#a1a1a1"/><rect x="118" y="393" width="5" height="5" fill="#ab9ea6"/><rect x="123" y="393" width="5" height="5" fill="#aa9fa2"/><rect x="128" y="393" width="5" height="5" fill="#a799a1"/><rect x="133" y="393" width="5" height="5" fill="#a3a7b0"/><rect x="138" y="393" width="5" height="5" fill="#9d97aa"/><rect x="143" y="393" width="5" height="5" fill="#acacac"/><rect x="148" y="393" width="5" height="5" fill="#a0a5ae"/><rect x="153" y="393" width="5" height="5" fill="#ababab"/><rect x="158" y="393" width="5" height="5" fill="#bfbfbf"/><rect x="163" y="393" width="5" height="5" fill="#b4aaa8"/><rect x="168" y="393" width="5" height="5" fill="#b7acb2"/><rect x="173" y="393" width="5" height="5" fill="#ada2a0"/><rect x="178" y="393" width="5" height="5" fill="#939393"/><rect x="183" y="393" width="5" height="5" fill="#bebac7"/><rect x="188" y="393" width="2" height="5" fill="#e3edf7"/><rect x="123" y="398" width="5" height="5" fill="#ededed"/><rect x="133" y="398" width="5" height="5" fill="#e0e1e4"/><rect x="178" y="398" width="5" height="5" fill="#eaebed"/><rect x="105" y="403" width="3" height="5" fill="#faf7f6"/><rect x="108" y="403" width="5" height="5" fill="#f4f5f6"/><rect x="133" y="403" width="5" height="5" fill="#edebec"/><rect x="168" y="403" width="5" height="5" fill="#f5f5f5"/><rect x="183" y="403" width="5" height="5" fill="#eff0f1"/><rect x="188" y="403" width="5" height="5" fill="#f5f5f5"/><rect x="105" y="408" width="3" height="5" fill="#e5d9d4"/><rect x="108" y="408" width="5" height="5" fill="#a9a9a9"/><rect x="113" y="408" width="5" height="5" fill="#f3f1f2"/><rect x="118" y="408" width="5" height="5" fill="#bdbfc6"/><rect x="123" y="408" width="5" height="5" fill="#cfd1d6"/><rect x="128" y="408" width="5" height="5" fill="#b1b1b1"/><rect x="133" y="408" width="5" height="5" fill="#aca6b6"/><rect x="138" y="408" width="5" height="5" fill="#c1c1c1"/><rect x="143" y="408" width="5" height="5" fill="#c6c6c6"/><rect x="148" y="408" width="5" height="5" fill="#cecbd4"/><rect x="153" y="408" width="5" height="5" fill="#c1b9b7"/><rect x="158" y="408" width="5" height="5" fill="#c4c0cc"/><rect x="163" y="408" width="5" height="5" fill="#d0c9cd"/><rect x="168" y="408" width="5" height="5" fill="#ababab"/><rect x="173" y="408" width="5" height="5" fill="#abafb7"/><rect x="178" y="408" width="5" height="5" fill="#c3c3c3"/><rect x="183" y="408" width="5" height="5" fill="#a29694"/><rect x="188" y="408" width="5" height="5" fill="#b0b3bb"/><rect x="193" y="408" width="1" height="5" fill="#e7eff8"/><rect x="105" y="413" width="3" height="5" fill="#ebe3de"/><rect x="108" y="413" width="5" height="5" fill="#c0c3c9"/><rect x="113" y="413" width="5" height="5" fill="#f1f2f3"/><rect x="118" y="413" width="5" height="5" fill="#cac2c7"/><rect x="123" y="413" width="5" height="5" fill="#d1d3d7"/><rect x="128" y="413" width="5" height="5" fill="#c9c5d0"/><rect x="133" y="413" width="5" height="5" fill="#d1c9cd"/><rect x="138" y="413" width="5" height="5" fill="#c6bfc1"/><rect x="143" y="413" width="5" height="5" fill="#b1b1b1"/><rect x="148" y="413" width="5" height="5" fill="#d9d4d3"/><rect x="153" y="413" width="5" height="5" fill="#b8b8b8"/><rect x="158" y="413" width="5" height="5" fill="#c4c7cc"/><rect x="163" y="413" width="5" height="5" fill="#cac1c6"/><rect x="168" y="413" width="5" height="5" fill="#beb5b3"/><rect x="173" y="413" width="5" height="5" fill="#c6c2cd"/><rect x="178" y="413" width="5" height="5" fill="#cfc7cc"/><rect x="183" y="413" width="5" height="5" fill="#b2b6bd"/><rect x="188" y="413" width="5" height="5" fill="#cdcfd4"/><rect x="193" y="413" width="1" height="5" fill="#eef4fa"/><rect x="143" y="418" width="5" height="5" fill="#f5f5f6"/><rect x="105" y="423" width="3" height="5" fill="#f1ebe8"/><rect x="108" y="423" width="5" height="5" fill="#f9f9f9"/><rect x="113" y="423" width="5" height="5" fill="#f8f7f7"/><rect x="118" y="423" width="5" height="5" fill="#dbd6d8"/><rect x="128" y="423" width="5" height="5" fill="#e7e4e4"/><rect x="133" y="423" width="5" height="5" fill="#e4e5e8"/><rect x="138" y="423" width="5" height="5" fill="#cbcbcb"/><rect x="143" y="423" width="5" height="5" fill="#f8f8f9"/><rect x="148" y="423" width="5" height="5" fill="#f8f8f8"/><rect x="153" y="423" width="5" height="5" fill="#f9f9f9"/><rect x="158" y="423" width="5" height="5" fill="#dbdbdb"/><rect x="105" y="428" width="3" height="5" fill="#e5d9d4"/><rect x="108" y="428" width="5" height="5" fill="#a8a2b3"/><rect x="113" y="428" width="5" height="5" fill="#8a8f9a"/><rect x="118" y="428" width="5" height="5" fill="#b2adbc"/><rect x="123" y="428" width="5" height="5" fill="#eeecec"/><rect x="128" y="428" width="5" height="5" fill="#bfb6b5"/><rect x="133" y="428" width="5" height="5" fill="#a3979b"/><rect x="138" y="428" width="5" height="5" fill="#b5b5b5"/><rect x="143" y="428" width="5" height="5" fill="#a79b9f"/><rect x="148" y="428" width="5" height="5" fill="#9f9297"/><rect x="153" y="428" width="5" height="5" fill="#a19499"/><rect x="158" y="428" width="5" height="5" fill="#8c909c"/><rect x="163" y="428" width="1" height="5" fill="#d9e6f4"/><rect x="105" y="433" width="3" height="5" fill="#f9f7f5"/><rect x="108" y="433" width="5" height="5" fill="#eeebec"/><rect x="113" y="433" width="5" height="5" fill="#e9eaec"/><rect x="118" y="433" width="5" height="5" fill="#efeded"/><rect x="123" y="433" width="5" height="5" fill="#fbfafb"/><rect x="128" y="433" width="5" height="5" fill="#ecedee"/><rect x="133" y="433" width="5" height="5" fill="#eeebeb"/><rect x="138" y="433" width="5" height="5" fill="#ecedef"/><rect x="143" y="433" width="5" height="5" fill="#eae9ed"/><rect x="148" y="433" width="5" height="5" fill="#ece9eb"/><rect x="153" y="433" width="5" height="5" fill="#ddd8d7"/><rect x="158" y="433" width="5" height="5" fill="#ebe9ed"/><rect x="163" y="433" width="1" height="5" fill="#f0f5fa"/><rect x="153" y="438" width="5" height="5" fill="#fafafa"/><rect x="105" y="443" width="3" height="5" fill="#efe8e5"/><rect x="108" y="443" width="5" height="5" fill="#cbc7d2"/><rect x="113" y="443" width="5" height="5" fill="#d4ced0"/><rect x="118" y="443" width="5" height="5" fill="#bababa"/><rect x="123" y="443" width="5" height="5" fill="#dcdcdc"/><rect x="128" y="443" width="5" height="5" fill="#c3babf"/><rect x="133" y="443" width="5" height="5" fill="#b7b7b7"/><rect x="138" y="443" width="5" height="5" fill="#b8b8b8"/><rect x="143" y="443" width="5" height="5" fill="#c6c8ce"/><rect x="148" y="443" width="5" height="5" fill="#d8dadd"/><rect x="153" y="443" width="5" height="5" fill="#bfb4ba"/><rect x="158" y="443" width="5" height="5" fill="#a9a9a9"/><rect x="163" y="443" width="5" height="5" fill="#c5c5c5"/><rect x="168" y="443" width="1" height="5" fill="#eaf1f9"/><rect x="105" y="448" width="3" height="5" fill="#e2d5cf"/><rect x="108" y="448" width="5" height="5" fill="#a79b9f"/><rect x="113" y="448" width="5" height="5" fill="#999999"/><rect x="118" y="448" width="5" height="5" fill="#949494"/><rect x="123" y="448" width="5" height="5" fill="#c1c1c1"/><rect x="128" y="448" width="5" height="5" fill="#b9afad"/><rect x="133" y="448" width="5" height="5" fill="#a2a7b0"/><rect x="138" y="448" width="5" height="5" fill="#aaaaaa"/><rect x="143" y="448" width="5" height="5" fill="#b5b8bf"/><rect x="148" y="448" width="5" height="5" fill="#c1b9b7"/><rect x="153" y="448" width="5" height="5" fill="#babdc4"/><rect x="158" y="448" width="5" height="5" fill="#9a9a9a"/><rect x="163" y="448" width="5" height="5" fill="#b0b0b0"/><rect x="168" y="448" width="1" height="5" fill="#ecf2f9"/><rect x="105" y="453" width="3" height="5" fill="#faf8f7"/><rect x="108" y="453" width="5" height="5" fill="#ece8ea"/><rect x="118" y="453" width="5" height="5" fill="#f0f0f0"/><rect x="108" y="458" width="5" height="5" fill="#ebe8ea"/><rect x="123" y="458" width="5" height="5" fill="#e0dcdb"/><rect x="138" y="458" width="5" height="5" fill="#e6e7ea"/><rect x="143" y="458" width="5" height="5" fill="#ededed"/><rect x="158" y="458" width="5" height="5" fill="#edebeb"/><rect x="105" y="463" width="3" height="5" fill="#e8dfda"/><rect x="108" y="463" width="5" height="5" fill="#b8afb2"/><rect x="113" y="463" width="5" height="5" fill="#b3aebd"/><rect x="118" y="463" width="5" height="5" fill="#a7a7a7"/><rect x="123" y="463" width="5" height="5" fill="#bdb9c6"/><rect x="128" y="463" width="5" height="5" fill="#b5b5b5"/><rect x="133" y="463" width="5" height="5" fill="#efeded"/><rect x="138" y="463" width="5" height="5" fill="#a7abb3"/><rect x="143" y="463" width="5" height="5" fill="#a1a1a1"/><rect x="148" y="463" width="5" height="5" fill="#b8bbc2"/><rect x="153" y="463" width="5" height="5" fill="#c7c4cf"/><rect x="158" y="463" width="5" height="5" fill="#c1b7bd"/><rect x="163" y="463" width="5" height="5" fill="#aaaaaa"/><rect x="168" y="463" width="1" height="5" fill="#e7eff8"/><rect x="105" y="468" width="3" height="5" fill="#f2ece9"/><rect x="108" y="468" width="5" height="5" fill="#e3e4e7"/><rect x="113" y="468" width="5" height="5" fill="#d9d4d6"/><rect x="118" y="468" width="5" height="5" fill="#dbd5d8"/><rect x="123" y="468" width="5" height="5" fill="#e1e1e1"/><rect x="128" y="468" width="5" height="5" fill="#cbc8d2"/><rect x="133" y="468" width="5" height="5" fill="#f6f5f7"/><rect x="138" y="468" width="5" height="5" fill="#e1dddc"/><rect x="143" y="468" width="5" height="5" fill="#dddbe1"/><rect x="148" y="468" width="5" height="5" fill="#d9d9d9"/><rect x="153" y="468" width="5" height="5" fill="#e8e4e6"/><rect x="158" y="468" width="5" height="5" fill="#e4e2e7"/><rect x="163" y="468" width="5" height="5" fill="#cdc6c5"/><rect x="168" y="468" width="1" height="5" fill="#f4f8fb"/><rect x="123" y="493" width="5" height="5" fill="#faf8f7"/><rect x="158" y="493" width="5" height="5" fill="#edebec"/><rect x="178" y="493" width="5" height="5" fill="#f3f1f2"/><rect x="188" y="493" width="5" height="5" fill="#f1f0f3"/><rect x="123" y="498" width="5" height="5" fill="#e5dad5"/><rect x="128" y="498" width="5" height="5" fill="#b2b2b2"/><rect x="133" y="498" width="5" height="5" fill="#d4cecd"/><rect x="138" y="498" width="5" height="5" fill="#efeff1"/><rect x="143" y="498" width="5" height="5" fill="#c6c2cd"/><rect x="148" y="498" width="5" height="5" fill="#d1cace"/><rect x="153" y="498" width="5" height="5" fill="#cec7cb"/><rect x="158" y="498" width="5" height="5" fill="#b4b8bf"/><rect x="163" y="498" width="5" height="5" fill="#c1bdc9"/><rect x="168" y="498" width="5" height="5" fill="#bfb6b5"/><rect x="173" y="498" width="5" height="5" fill="#b6b6b6"/><rect x="178" y="498" width="5" height="5" fill="#b5b8c0"/><rect x="183" y="498" width="5" height="5" fill="#c3bbbe"/><rect x="188" y="498" width="5" height="5" fill="#b1a6aa"/><rect x="193" y="498" width="2" height="5" fill="#e8f0f8"/><rect x="123" y="503" width="5" height="5" fill="#eae1dd"/><rect x="128" y="503" width="5" height="5" fill="#c0bcc8"/><rect x="133" y="503" width="5" height="5" fill="#c6c6c6"/><rect x="138" y="503" width="5" height="5" fill="#f3f3f3"/><rect x="143" y="503" width="5" height="5" fill="#c5c7cd"/><rect x="148" y="503" width="5" height="5" fill="#ccced3"/><rect x="153" y="503" width="5" height="5" fill="#d4d4d4"/><rect x="158" y="503" width="5" height="5" fill="#bbbbbb"/><rect x="163" y="503" width="5" height="5" fill="#bbbbbb"/><rect x="168" y="503" width="5" height="5" fill="#c1b9b7"/><rect x="173" y="503" width="5" height="5" fill="#c6bec1"/><rect x="178" y="503" width="5" height="5" fill="#d8d8d8"/><rect x="183" y="503" width="5" height="5" fill="#cfcfcf"/><rect x="188" y="503" width="5" height="5" fill="#c5bdbc"/><rect x="193" y="503" width="2" height="5" fill="#eaf1f9"/><rect x="158" y="508" width="5" height="5" fill="#f9f8f8"/><rect x="168" y="508" width="5" height="5" fill="#f8f8f8"/><rect x="128" y="513" width="5" height="5" fill="#e2e2e2"/><rect x="133" y="513" width="5" height="5" fill="#dfdfdf"/><rect x="143" y="513" width="5" height="5" fill="#dfdada"/><rect x="148" y="513" width="5" height="5" fill="#d4d4d4"/><rect x="153" y="513" width="5" height="5" fill="#f8f9f9"/><rect x="158" y="513" width="5" height="5" fill="#fafafa"/><rect x="163" y="513" width="5" height="5" fill="#cacdd2"/><rect x="168" y="513" width="5" height="5" fill="#fafafa"/><rect x="173" y="513" width="5" height="5" fill="#eae7e8"/><rect x="178" y="513" width="5" height="5" fill="#dedede"/><rect x="183" y="513" width="5" height="5" fill="#cfd2d6"/><rect x="188" y="513" width="5" height="5" fill="#faf9f9"/><rect x="123" y="518" width="5" height="5" fill="#dccdc6"/><rect x="128" y="518" width="5" height="5" fill="#a59896"/><rect x="133" y="518" width="5" height="5" fill="#aea8b8"/><rect x="138" y="518" width="5" height="5" fill="#efedee"/><rect x="143" y="518" width="5" height="5" fill="#a6a6a6"/><rect x="148" y="518" width="5" height="5" fill="#bab6c3"/><rect x="153" y="518" width="5" height="5" fill="#9a8c89"/><rect x="158" y="518" width="5" height="5" fill="#ab9da5"/><rect x="163" y="518" width="5" height="5" fill="#b2a6ad"/><rect x="168" y="518" width="5" height="5" fill="#aaaeb6"/><rect x="173" y="518" width="5" height="5" fill="#a3a3a3"/><rect x="178" y="518" width="5" height="5" fill="#9f8f98"/><rect x="183" y="518" width="5" height="5" fill="#b4b7be"/><rect x="188" y="518" width="5" height="5" fill="#a0a0a0"/><rect x="193" y="518" width="2" height="5" fill="#e4edf7"/><rect x="123" y="523" width="5" height="5" fill="#f9f6f5"/><rect x="128" y="523" width="5" height="5" fill="#e9eaec"/><rect x="133" y="523" width="5" height="5" fill="#ecedef"/><rect x="138" y="523" width="5" height="5" fill="#fbfbfb"/><rect x="143" y="523" width="5" height="5" fill="#efeff1"/><rect x="148" y="523" width="5" height="5" fill="#f2f0f1"/><rect x="153" y="523" width="5" height="5" fill="#ecedee"/><rect x="158" y="523" width="5" height="5" fill="#eeeced"/><rect x="163" y="523" width="5" height="5" fill="#eaeaea"/><rect x="168" y="523" width="5" height="5" fill="#efeded"/><rect x="173" y="523" width="5" height="5" fill="#e8e9eb"/><rect x="178" y="523" width="5" height="5" fill="#efeced"/><rect x="183" y="523" width="5" height="5" fill="#eeeef0"/><rect x="188" y="523" width="5" height="5" fill="#d8d2d6"/><rect x="143" y="528" width="5" height="5" fill="#fafafa"/><rect x="123" y="533" width="5" height="5" fill="#efe8e4"/><rect x="128" y="533" width="5" height="5" fill="#d6d0cf"/><rect x="133" y="533" width="5" height="5" fill="#dedad9"/><rect x="138" y="533" width="5" height="5" fill="#c0b7ba"/><rect x="143" y="533" width="5" height="5" fill="#aeaeae"/><rect x="148" y="533" width="5" height="5" fill="#cfc9cb"/><rect x="153" y="533" width="5" height="5" fill="#cdcfd4"/><rect x="158" y="533" width="5" height="5" fill="#cccccc"/><rect x="163" y="533" width="5" height="5" fill="#b7b7b7"/><rect x="168" y="533" width="5" height="5" fill="#dcdcdc"/><rect x="173" y="533" width="5" height="5" fill="#abafb7"/><rect x="178" y="533" width="5" height="5" fill="#e0dee4"/><rect x="183" y="533" width="5" height="5" fill="#c0b8bb"/><rect x="188" y="533" width="5" height="5" fill="#d8d1d5"/><rect x="193" y="533" width="2" height="5" fill="#f4f8fb"/><rect x="123" y="538" width="5" height="5" fill="#dbccc5"/><rect x="128" y="538" width="5" height="5" fill="#b2b6bd"/><rect x="133" y="538" width="5" height="5" fill="#b9bdc3"/><rect x="138" y="538" width="5" height="5" fill="#c0b8b6"/><rect x="143" y="538" width="5" height="5" fill="#bebac6"/><rect x="148" y="538" width="5" height="5" fill="#bcb3b6"/><rect x="153" y="538" width="5" height="5" fill="#a4a4a4"/><rect x="158" y="538" width="5" height="5" fill="#bab1af"/><rect x="163" y="538" width="5" height="5" fill="#b7b2c0"/><rect x="168" y="538" width="5" height="5" fill="#c1bdc9"/><rect x="173" y="538" width="5" height="5" fill="#b7bac1"/><rect x="178" y="538" width="5" height="5" fill="#bcb3b6"/><rect x="183" y="538" width="5" height="5" fill="#c0b7b6"/><rect x="188" y="538" width="5" height="5" fill="#c1b9bb"/><rect x="193" y="538" width="2" height="5" fill="#eef4fa"/><rect x="123" y="543" width="5" height="5" fill="#f7f4f2"/><rect x="138" y="543" width="5" height="5" fill="#ecebee"/><rect x="143" y="543" width="5" height="5" fill="#ededed"/><rect x="178" y="543" width="5" height="5" fill="#ebe8e9"/><rect x="133" y="548" width="5" height="5" fill="#e9e6e5"/><rect x="138" y="548" width="5" height="5" fill="#e8e9eb"/><rect x="163" y="548" width="5" height="5" fill="#dadcdf"/><rect x="168" y="548" width="5" height="5" fill="#f0eff2"/><rect x="173" y="548" width="5" height="5" fill="#edebea"/><rect x="123" y="553" width="5" height="5" fill="#e2d6d0"/><rect x="128" y="553" width="5" height="5" fill="#b8adb3"/><rect x="133" y="553" width="5" height="5" fill="#b7b3c1"/><rect x="138" y="553" width="5" height="5" fill="#a2a2a2"/><rect x="143" y="553" width="5" height="5" fill="#b5b5b5"/><rect x="148" y="553" width="5" height="5" fill="#c6c6c6"/><rect x="153" y="553" width="5" height="5" fill="#a4a7b0"/><rect x="158" y="553" width="5" height="5" fill="#b9bcc3"/><rect x="163" y="553" width="5" height="5" fill="#a3a3a3"/><rect x="168" y="553" width="5" height="5" fill="#cac3c2"/><rect x="173" y="553" width="5" height="5" fill="#c0c3c9"/><rect x="178" y="553" width="5" height="5" fill="#a7abb4"/><rect x="183" y="553" width="5" height="5" fill="#9ea2ac"/><rect x="188" y="553" width="5" height="5" fill="#c3bfca"/><rect x="193" y="553" width="2" height="5" fill="#e5eef7"/><rect x="123" y="558" width="5" height="5" fill="#f3edeb"/><rect x="128" y="558" width="5" height="5" fill="#dfe0e3"/><rect x="133" y="558" width="5" height="5" fill="#e1dcdf"/><rect x="138" y="558" width="5" height="5" fill="#dddfe2"/><rect x="143" y="558" width="5" height="5" fill="#d9dbdf"/><rect x="148" y="558" width="5" height="5" fill="#e5e1e4"/><rect x="153" y="558" width="5" height="5" fill="#dad7de"/><rect x="158" y="558" width="5" height="5" fill="#bcbcbc"/><rect x="163" y="558" width="5" height="5" fill="#ddd9d8"/><rect x="168" y="558" width="5" height="5" fill="#c1c3c9"/><rect x="173" y="558" width="5" height="5" fill="#e7e4e4"/><rect x="178" y="558" width="5" height="5" fill="#dcdde1"/><rect x="183" y="558" width="5" height="5" fill="#b7bac1"/><rect x="188" y="558" width="5" height="5" fill="#d9d9d9"/><rect x="193" y="558" width="2" height="5" fill="#f4f7fb"/><rect x="123" y="568" width="5" height="5" fill="#f7f3f2"/><rect x="128" y="568" width="5" height="5" fill="#dfe1e4"/><rect x="133" y="568" width="5" height="5" fill="#cbcbcb"/><rect x="138" y="568" width="5" height="5" fill="#e7e3e5"/><rect x="143" y="568" width="5" height="5" fill="#e5e1e2"/><rect x="148" y="568" width="5" height="5" fill="#cecece"/><rect x="153" y="568" width="5" height="5" fill="#eae7e9"/><rect x="158" y="568" width="5" height="5" fill="#e7e7e7"/><rect x="163" y="568" width="5" height="5" fill="#e5e6e9"/><rect x="168" y="568" width="5" height="5" fill="#faf9fa"/><rect x="173" y="568" width="5" height="5" fill="#eae8e8"/><rect x="178" y="568" width="5" height="5" fill="#dddddd"/><rect x="183" y="568" width="5" height="5" fill="#eae7e8"/><rect x="188" y="568" width="5" height="5" fill="#e2dedd"/><rect x="193" y="568" width="2" height="5" fill="#eaf1f9"/><rect x="123" y="573" width="5" height="5" fill="#e1d5ce"/><rect x="128" y="573" width="5" height="5" fill="#96858f"/><rect x="133" y="573" width="5" height="5" fill="#a8acb5"/><rect x="138" y="573" width="5" height="5" fill="#989898"/><rect x="143" y="573" width="5" height="5" fill="#968fa4"/><rect x="148" y="573" width="5" height="5" fill="#b1a7a5"/><rect x="153" y="573" width="5" height="5" fill="#a1a6ae"/><rect x="158" y="573" width="5" height="5" fill="#a1a1a1"/><rect x="163" y="573" width="5" height="5" fill="#a0a5ae"/><rect x="168" y="573" width="5" height="5" fill="#e7e7e7"/><rect x="173" y="573" width="5" height="5" fill="#b8aead"/><rect x="178" y="573" width="5" height="5" fill="#848484"/><rect x="183" y="573" width="5" height="5" fill="#aaaaaa"/><rect x="188" y="573" width="5" height="5" fill="#959595"/><rect x="193" y="573" width="2" height="5" fill="#dde9f5"/><rect x="138" y="578" width="5" height="5" fill="#e6e4e9"/><rect x="148" y="578" width="5" height="5" fill="#ececec"/><rect x="188" y="578" width="5" height="5" fill="#efedee"/></svg>
<div style="left:232px;top:79px;width:17px;height:601px;background:#ffffff;border-left:1px solid #cfcfcf;border-right:1px solid #cfcfcf;box-sizing:border-box;"></div>
<div style="left:232px;top:79px;width:17px;height:17px;background:#ffffff;border:1px solid #cfcfcf;box-sizing:border-box;"></div>
<div style="left:232px;top:142px;width:17px;height:506px;background:#dcdcdc;border:1px solid #a8a8a8;box-sizing:border-box;"></div>
<div style="left:232px;top:664px;width:17px;height:17px;background:#ffffff;border:1px solid #cfcfcf;box-sizing:border-box;"></div>
<svg style="left:236px;top:85px" width="9" height="7" viewBox="0 0 9 7"><path d="M1.2 5.6 L4.5 1.8 L7.8 5.6" fill="none" stroke="#606060" stroke-width="1.3"/></svg>
<svg style="left:236px;top:668px" width="9" height="7" viewBox="0 0 9 7"><path d="M1.2 1.4 L4.5 5.2 L7.8 1.4" fill="none" stroke="#606060" stroke-width="1.3"/></svg>
<div style="left:6px;top:680px;width:226px;height:17px;background:#ffffff;border-top:1px solid #cfcfcf;border-bottom:1px solid #cfcfcf;box-sizing:border-box;"></div>
<div style="left:6px;top:680px;width:17px;height:17px;background:#ffffff;border:1px solid #cfcfcf;box-sizing:border-box;"></div>
<div style="left:23px;top:680px;width:145px;height:17px;background:#dcdcdc;border:1px solid #a8a8a8;box-sizing:border-box;"></div>
<div style="left:215px;top:680px;width:17px;height:17px;background:#ffffff;border:1px solid #cfcfcf;box-sizing:border-box;"></div>
<svg style="left:10px;top:684px" width="7" height="9" viewBox="0 0 7 9"><path d="M5.4 1.2 L1.8 4.5 L5.4 7.8" fill="none" stroke="#606060" stroke-width="1.3"/></svg>
<svg style="left:220px;top:684px" width="7" height="9" viewBox="0 0 7 9"><path d="M1.6 1.2 L5.2 4.5 L1.6 7.8" fill="none" stroke="#606060" stroke-width="1.3"/></svg>
<div style="left:92px;top:685px;width:1px;height:7px;background:#606060;"></div>
<div style="left:95px;top:685px;width:1px;height:7px;background:#606060;"></div>
<div style="left:98px;top:685px;width:1px;height:7px;background:#606060;"></div>
<div style="left:232px;top:680px;width:17px;height:17px;background:#f0f0f0;"></div>
<div style="left:251px;top:77px;width:3px;height:622px;background:#f4f4f4;"></div>
<div style="left:254px;top:77px;width:683px;height:622px;background:#f0f0f0;border-left:1px solid #a0a0a0;border-top:1px solid #a0a0a0;box-sizing:border-box;"></div>
<div style="left:255px;top:78px;width:682px;height:620px;background:#f0f0f0;border-left:1px solid #696969;border-top:1px solid #696969;box-sizing:border-box;"></div>
<div style="left:256px;top:79px;width:681px;height:619px;background:#f0f0f0;border-left:1px solid #ffffff;border-top:1px solid #ffffff;box-sizing:border-box;"></div>
<div style="left:254px;top:697px;width:683px;height:1px;background:#ffffff;"></div>
<div style="left:254px;top:698px;width:683px;height:1px;background:#ffffff;"></div>
<span class="t" style="left:260px;top:83px;font-size:14px;line-height:14px;color:#000;font-weight:700;letter-spacing:0.232px;">Software Deployment GPO</span>
<div style="left:259px;top:121px;width:678px;height:573px;background:#ffffff;border-left:1px solid #898c95;border-top:1px solid #898c95;border-bottom:1px solid #898c95;box-sizing:border-box;"></div>
<div style="left:261px;top:103px;width:44px;height:19px;background:#f0f0f0;border:1px solid #898c95;border-bottom:none;box-sizing:border-box;"></div>
<div style="left:304px;top:103px;width:43px;height:19px;background:#f0f0f0;border:1px solid #898c95;border-bottom:none;box-sizing:border-box;"></div>
<div style="left:400px;top:103px;width:62px;height:19px;background:#f0f0f0;border:1px solid #898c95;border-bottom:none;box-sizing:border-box;"></div>
<div style="left:461px;top:103px;width:42px;height:19px;background:#f0f0f0;border:1px solid #898c95;border-bottom:none;box-sizing:border-box;"></div>
<div style="left:346px;top:101px;width:54px;height:21px;background:#ffffff;border:1px solid #898c95;border-bottom:none;box-sizing:border-box;"></div>
<span class="t" style="left:267px;top:108px;font-size:11px;line-height:11px;color:#000;letter-spacing:-0.241px;">Scope</span>
<span class="t" style="left:310px;top:108px;font-size:11px;line-height:11px;color:#000;letter-spacing:-0.375px;">Details</span>
<span class="t" style="left:354px;top:106px;font-size:11px;line-height:11px;color:#000;letter-spacing:-0.219px;">Settings</span>
<span class="t" style="left:404px;top:108px;font-size:11px;line-height:11px;color:#000;letter-spacing:-0.259px;">Delegation</span>
<span class="t" style="left:467px;top:108px;font-size:11px;line-height:11px;color:#000;letter-spacing:-0.365px;">Status</span>
<div style="left:268px;top:128px;width:669px;height:557px;background:#ffffff;border-left:1px solid #696969;border-top:1px solid #696969;border-bottom:1px solid #696969;box-sizing:border-box;"></div>
<span class="t" style="left:281px;top:135px;font-size:13px;line-height:13px;color:#333;font-weight:700;transform:scaleX(1.155);transform-origin:0 0;">Software Deployment GPO</span>
<span class="t" style="left:280px;top:155px;font-size:11px;line-height:11px;color:#222;letter-spacing:-0.009px;">Data collected on: 3/25/2021 6:38:22 PM</span>
<div style="left:269px;top:166px;width:668px;height:22px;background:#fdf6d8;border-left:1px solid #d0d0d0;box-sizing:border-box;"></div>
<div style="left:269px;top:188px;width:668px;height:1px;background:#c8c8c8;"></div>
<span class="t" style="left:278px;top:171px;font-size:12px;line-height:12px;color:#3333cc;font-weight:700;letter-spacing:-0.208px;">Computer Configuration (Enabled)</span>
<div style="left:324px;top:189px;width:613px;height:23px;background:#f9f9f9;border-left:1px solid #c8c8c8;border-bottom:1px solid #c8c8c8;box-sizing:border-box;"></div>
<span class="t" style="left:346px;top:195px;font-size:11px;line-height:11px;color:#000;letter-spacing:-0.162px;">No settings defined.</span>
<div style="left:269px;top:214px;width:668px;height:1px;background:#dcdcdc;"></div>
<div style="left:269px;top:215px;width:668px;height:22px;background:#fdf6d8;border-left:1px solid #d0d0d0;box-sizing:border-box;"></div>
<div style="left:269px;top:237px;width:668px;height:1px;background:#c8c8c8;"></div>
<span class="t" style="left:278px;top:220px;font-size:12px;line-height:12px;color:#3333cc;font-weight:700;letter-spacing:-0.131px;">User Configuration (Enabled)</span>
<div style="left:324px;top:238px;width:613px;height:23px;background:#f9f9f9;border-left:1px solid #c8c8c8;border-bottom:1px solid #c8c8c8;box-sizing:border-box;"></div>
<span class="t" style="left:346px;top:244px;font-size:11px;line-height:11px;color:#000;letter-spacing:-0.162px;">No settings defined.</span>
<div style="left:3px;top:699px;width:934px;height:1px;background:#b4b4b4;"></div>
<div style="left:3px;top:700px;width:934px;height:21px;background:#ffffff;"></div>
<span class="t" style="left:6px;top:706px;font-size:12px;line-height:12px;color:#000;letter-spacing:-0.091px;">Open the GPO editor</span>
<div style="left:3px;top:721px;width:934px;height:1px;background:#5f5f5f;"></div>
<div style="left:3px;top:722px;width:934px;height:2px;background:#68c8ea;"></div>
<div style="left:241px;top:721px;width:60px;height:3px;background:#e6f4fb;border:1px solid #1a1a1a;border-bottom:none;box-sizing:border-box;"></div>
<div style="left:198px;top:281px;width:218px;height:308px;background:#f0f0f0;border:1px solid #979797;box-sizing:border-box;"></div>
<div style="left:199px;top:282px;width:216px;height:306px;border:1px solid #f8f8f8;box-sizing:border-box;"></div>
<div style="left:228px;top:284px;width:1px;height:302px;background:#cdcdcd;"></div>
<div style="left:229px;top:284px;width:1px;height:302px;background:#f8f8f8;"></div>
<div style="left:201px;top:284px;width:212px;height:22px;background:#dcebfc;border:1px solid #26a0da;box-sizing:border-box;"></div>
<span class="t" style="left:233px;top:289px;font-size:12px;line-height:12px;color:#000;letter-spacing:-0.241px;">Edit...</span>
<span class="t" style="left:233px;top:311px;font-size:12px;line-height:12px;color:#000;letter-spacing:-0.503px;">GPO Status</span>
<span class="t" style="left:233px;top:337px;font-size:12px;line-height:12px;color:#000;letter-spacing:-0.336px;">Back Up...</span>
<span class="t" style="left:233px;top:359px;font-size:12px;line-height:12px;color:#000;letter-spacing:-0.169px;">Restore from Backup...</span>
<span class="t" style="left:233px;top:381px;font-size:12px;line-height:12px;color:#000;letter-spacing:-0.039px;">Import Settings...</span>
<span class="t" style="left:233px;top:403px;font-size:12px;line-height:12px;color:#000;letter-spacing:-0.408px;">Save Report...</span>
<span class="t" style="left:233px;top:429px;font-size:12px;line-height:12px;color:#000;letter-spacing:-0.199px;">View</span>
<span class="t" style="left:233px;top:451px;font-size:12px;line-height:12px;color:#000;letter-spacing:0.065px;">New Window from Here</span>
<span class="t" style="left:233px;top:477px;font-size:12px;line-height:12px;color:#000;">Copy</span>
<span class="t" style="left:233px;top:499px;font-size:12px;line-height:12px;color:#000;letter-spacing:-0.281px;">Delete</span>
<span class="t" style="left:233px;top:521px;font-size:12px;line-height:12px;color:#000;letter-spacing:-0.393px;">Rename</span>
<span class="t" style="left:233px;top:543px;font-size:12px;line-height:12px;color:#000;letter-spacing:-0.433px;">Refresh</span>
<span class="t" style="left:233px;top:569px;font-size:12px;line-height:12px;color:#000;letter-spacing:0.078px;">Help</span>
<div style="left:229px;top:329px;width:185px;height:1px;background:#cdcdcd;"></div>
<div style="left:229px;top:330px;width:185px;height:1px;background:#f8f8f8;"></div>
<div style="left:229px;top:421px;width:185px;height:1px;background:#cdcdcd;"></div>
<div style="left:229px;top:422px;width:185px;height:1px;background:#f8f8f8;"></div>
<div style="left:229px;top:469px;width:185px;height:1px;background:#cdcdcd;"></div>
<div style="left:229px;top:470px;width:185px;height:1px;background:#f8f8f8;"></div>
<div style="left:229px;top:561px;width:185px;height:1px;background:#cdcdcd;"></div>
<div style="left:229px;top:562px;width:185px;height:1px;background:#f8f8f8;"></div>
<svg style="left:400px;top:313px" width="5" height="8" viewBox="0 0 5 8"><path d="M0.5 0.5 L4.5 4 L0.5 7.5 Z" fill="#000"/></svg>
<svg style="left:400px;top:431px" width="5" height="8" viewBox="0 0 5 8"><path d="M0.5 0.5 L4.5 4 L0.5 7.5 Z" fill="#000"/></svg></body></html>
